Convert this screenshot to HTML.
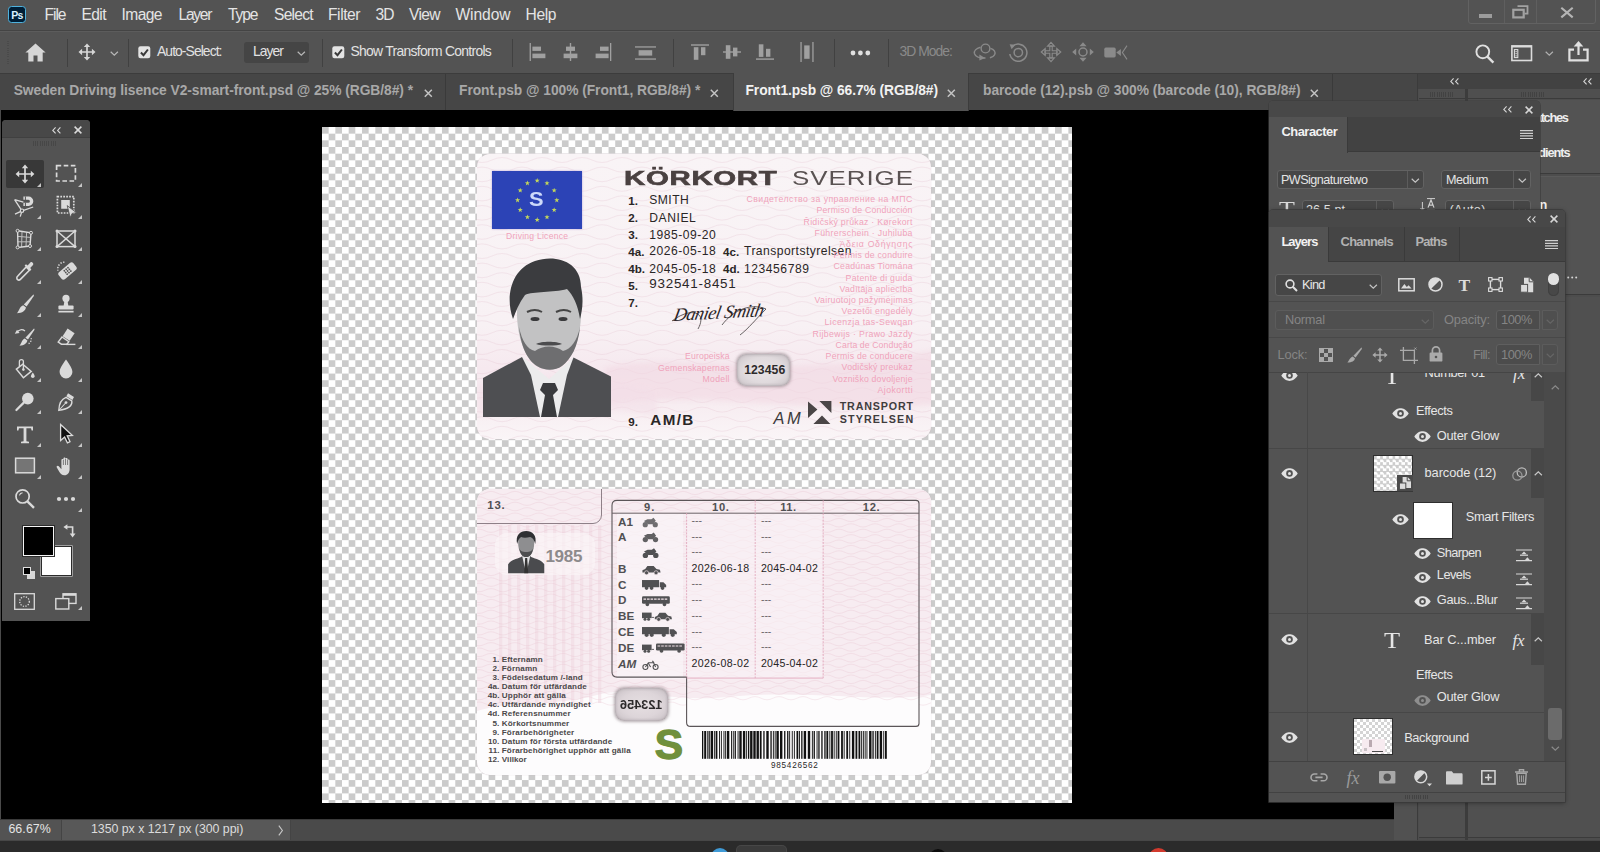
<!DOCTYPE html>
<html lang="en">
<head>
<meta charset="utf-8">
<title>Front1.psb @ 66.7% (RGB/8#)</title>
<style>
*{box-sizing:border-box;margin:0;padding:0}
html,body{width:1600px;height:852px;overflow:hidden;background:#000}
body{position:relative;font-family:"Liberation Sans","DejaVu Sans",sans-serif;color:#dcdcdc;font-size:13px}
.abs{position:absolute}
.t{position:absolute;white-space:nowrap;line-height:1}
svg{position:absolute;overflow:visible}
#menubar{left:0;top:0;width:1600px;height:31px;background:#535353;border-bottom:1px solid #444}
#optbar{left:0;top:31px;width:1600px;height:42px;background:#535353;border-top:1px solid #5c5c5c}
#optbar .sep{position:absolute;top:7px;width:1px;height:28px;background:#414141}
#tabbar{left:0;top:73px;width:1600px;height:37px;background:#464646;border-top:1px solid #3c3c3c}
#tabbar .tsep{position:absolute;top:0;width:1px;height:36px;background:#3a3a3a}
</style>
</head>
<body>
<div id="menubar" class="abs">
<div class="abs" style="left:8px;top:6px;width:18px;height:17px;background:#001e36;border:1.500px solid #4fb2de;border-radius:3.500px;"></div>
<div class="t" style="left:11.3px;top:10.1px;font-size:10.5px;font-weight:bold;color:#d9efff;letter-spacing:-0.84px;">Ps</div>
<div class="t" style="left:44.5px;top:7.2px;font-size:15.6px;color:#e4e4e4;letter-spacing:-1.05px;">File</div>
<div class="t" style="left:81.5px;top:7.2px;font-size:15.6px;color:#e4e4e4;letter-spacing:-0.63px;">Edit</div>
<div class="t" style="left:121.5px;top:7.2px;font-size:15.6px;color:#e4e4e4;letter-spacing:-0.59px;">Image</div>
<div class="t" style="left:178.5px;top:7.2px;font-size:15.6px;color:#e4e4e4;letter-spacing:-1.26px;">Layer</div>
<div class="t" style="left:228.0px;top:7.2px;font-size:15.6px;color:#e4e4e4;letter-spacing:-1.11px;">Type</div>
<div class="t" style="left:274.0px;top:7.2px;font-size:15.6px;color:#e4e4e4;letter-spacing:-0.77px;">Select</div>
<div class="t" style="left:328.0px;top:7.2px;font-size:15.6px;color:#e4e4e4;letter-spacing:-0.43px;">Filter</div>
<div class="t" style="left:375.5px;top:7.2px;font-size:15.6px;color:#e4e4e4;letter-spacing:-0.94px;">3D</div>
<div class="t" style="left:409.0px;top:7.2px;font-size:15.6px;color:#e4e4e4;letter-spacing:-0.68px;">View</div>
<div class="t" style="left:455.5px;top:7.2px;font-size:15.6px;color:#e4e4e4;letter-spacing:-0.10px;">Window</div>
<div class="t" style="left:525.5px;top:7.2px;font-size:15.6px;color:#e4e4e4;letter-spacing:-0.36px;">Help</div>
<div class="abs" style="left:1468px;top:-1px;width:128px;height:24.5px;border:1px solid #626262;border-radius:0 0 3px 3px;"></div>
<div class="abs" style="left:1504px;top:0px;width:1px;height:23px;background:#5f5f5f;"></div>
<div class="abs" style="left:1536px;top:0px;width:1px;height:23px;background:#5f5f5f;"></div>
<div class="abs" style="left:1479px;top:14px;width:13px;height:4px;background:#9c9c9c;"></div>
<svg style="left:1511.5px;top:5.4px;" width="17" height="14" viewBox="0 0 17 14"><path d="M5.500 1.200h10v7.400h-3" fill="none" stroke="#a2a2a2" stroke-width="1.800"/><rect x="1.300" y="4.800" width="10.400" height="7.600" fill="none" stroke="#a2a2a2" stroke-width="2.200"/></svg>
<svg style="left:1560px;top:6.6px;" width="14" height="11" viewBox="0 0 14 11"><path d="M1.300 0.800l11.400 9.600M12.700 0.800l-11.400 9.600" stroke="#b4b4b4" stroke-width="2.100" fill="none"/></svg>
</div>
<div id="optbar" class="abs">
<div class="abs" style="left:6.500px;top:9px;width:2px;height:24px;background:repeating-linear-gradient(180deg,#4a4a4a 0 1px,transparent 1px 2.200px)"></div>
<svg style="left:25px;top:10.5px;" width="21" height="19" viewBox="0 0 21 19"><path d="M10.5 0.6L0.4 9.6h2.9V18.4h5.2v-5.9h4v5.9h5.2V9.6h2.9z" fill="#d6d6d6"/></svg>
<div class="sep" style="left:67px"></div>
<div class="sep" style="left:128px"></div>
<div class="sep" style="left:321.5px"></div>
<div class="sep" style="left:511.5px"></div>
<div class="sep" style="left:672.5px"></div>
<div class="sep" style="left:834px"></div>
<div class="sep" style="left:887.5px"></div>
<svg style="left:78px;top:11px;" width="18" height="18" viewBox="0 0 18 18"><path d="M9 0.5l3.2 3.6H5.8zM9 17.5l3.2-3.6H5.8zM0.5 9l3.6-3.2v6.4zM17.5 9l-3.6-3.2v6.4z" fill="#d6d6d6"/><path d="M9 3.5v11M3.5 9h11" stroke="#d6d6d6" stroke-width="1.7" fill="none"/></svg>
<svg style="left:109.5px;top:19px;" width="9" height="5" viewBox="0 0 9 5"><path d="M0.7 0.8l3.6 3.4 3.6-3.4" fill="none" stroke="#b8b8b8" stroke-width="1.2"/></svg>
<svg style="left:138px;top:14px;" width="13" height="13" viewBox="0 0 13 13"><rect x="0.3" y="0.3" width="12" height="12" rx="2.2" fill="#e4e4e4"/><path d="M2.9 6.5l2.6 2.7 4.4-5.7" fill="none" stroke="#3a3a3a" stroke-width="2"/></svg>
<div class="t" style="left:157.0px;top:12.7px;font-size:13.9px;color:#e2e2e2;letter-spacing:-0.93px;">Auto-Select:</div>
<div class="abs" style="left:243.5px;top:10px;width:65.5px;height:21px;background:#454545;border-radius:3px;"></div>
<div class="t" style="left:253.0px;top:13.0px;font-size:13.9px;color:#e2e2e2;letter-spacing:-0.94px;">Layer</div>
<svg style="left:296.5px;top:19px;" width="9" height="5" viewBox="0 0 9 5"><path d="M0.7 0.8l3.6 3.4 3.6-3.4" fill="none" stroke="#b8b8b8" stroke-width="1.2"/></svg>
<svg style="left:332px;top:14px;" width="13" height="13" viewBox="0 0 13 13"><rect x="0.3" y="0.3" width="12" height="12" rx="2.2" fill="#e4e4e4"/><path d="M2.9 6.5l2.6 2.7 4.4-5.7" fill="none" stroke="#3a3a3a" stroke-width="2"/></svg>
<div class="t" style="left:350.5px;top:12.7px;font-size:13.9px;color:#e2e2e2;letter-spacing:-0.70px;">Show Transform Controls</div>
<svg style="left:529px;top:11px;" width="17" height="18" viewBox="0 0 17 18"><rect x="0.6" y="0" width="1.3" height="18" fill="#a0a0a0"/><rect x="3.4" y="3.6" width="8.6" height="4.3" fill="#a0a0a0"/><rect x="3.4" y="10.6" width="13" height="4.6" fill="#a0a0a0"/></svg>
<svg style="left:562.5px;top:11px;" width="15" height="18" viewBox="0 0 15 18"><rect x="6.8" y="0" width="1.4" height="18" fill="#a0a0a0"/><rect x="3" y="3.6" width="9" height="4.3" fill="#a0a0a0"/><rect x="0.6" y="10.6" width="13.8" height="4.6" fill="#a0a0a0"/></svg>
<svg style="left:594.5px;top:11px;" width="17" height="18" viewBox="0 0 17 18"><rect x="15" y="0" width="1.3" height="18" fill="#a0a0a0"/><rect x="5" y="3.6" width="8.6" height="4.3" fill="#a0a0a0"/><rect x="0.6" y="10.6" width="13" height="4.6" fill="#a0a0a0"/></svg>
<svg style="left:635px;top:13.5px;" width="21" height="14" viewBox="0 0 21 14"><rect x="0" y="0.3" width="21" height="1.3" fill="#a0a0a0"/><rect x="0" y="12.4" width="21" height="1.3" fill="#a0a0a0"/><rect x="3.6" y="4.2" width="13.6" height="5.4" fill="#a0a0a0"/></svg>
<svg style="left:690.5px;top:12.299999999999997px;" width="18" height="16" viewBox="0 0 18 16"><rect x="0" y="0.3" width="18" height="1.4" fill="#a0a0a0"/><rect x="2.8" y="3.2" width="4.6" height="12.6" fill="#a0a0a0"/><rect x="10" y="3.2" width="4.4" height="8" fill="#a0a0a0"/></svg>
<svg style="left:723px;top:12.299999999999997px;" width="18" height="16" viewBox="0 0 18 16"><rect x="0" y="7.3" width="18" height="1.4" fill="#a0a0a0"/><rect x="2.8" y="1.2" width="4.6" height="13.6" fill="#a0a0a0"/><rect x="10" y="3.6" width="4.4" height="8.8" fill="#a0a0a0"/></svg>
<svg style="left:755.5px;top:12.299999999999997px;" width="18" height="16" viewBox="0 0 18 16"><rect x="0" y="14.4" width="18" height="1.4" fill="#a0a0a0"/><rect x="2.8" y="0.3" width="4.6" height="12.6" fill="#a0a0a0"/><rect x="10" y="4.8" width="4.4" height="8" fill="#a0a0a0"/></svg>
<svg style="left:800px;top:10px;" width="14" height="20" viewBox="0 0 14 20"><rect x="0.4" y="0" width="1.3" height="20" fill="#a0a0a0"/><rect x="12.3" y="0" width="1.3" height="20" fill="#a0a0a0"/><rect x="4.2" y="3.4" width="5.4" height="13.4" fill="#a0a0a0"/></svg>
<svg style="left:850px;top:18px;" width="21" height="6" viewBox="0 0 21 6"><circle cx="3" cy="3" r="2.4" fill="#e0e0e0"/><circle cx="10.4" cy="3" r="2.4" fill="#e0e0e0"/><circle cx="17.8" cy="3" r="2.4" fill="#e0e0e0"/></svg>
<div class="t" style="left:899.5px;top:12.7px;font-size:13.9px;color:#8a8a8a;letter-spacing:-0.97px;">3D Mode:</div>
<svg style="left:973px;top:10px;" width="24" height="20" viewBox="0 0 24 20"><circle cx="12.5" cy="6.5" r="4.4" fill="none" stroke="#8a8a8a" stroke-width="1.4"/><path d="M7.5 5.2C3 6.3 0.6 9 1.5 11.7c1.1 3 6 4.5 11 4.3" fill="none" stroke="#8a8a8a" stroke-width="1.4"/><path d="M17.5 6.3c3.6 1 5.3 3.7 4.2 6.2-.8 1.8-2.8 2.8-4.8 3.2" fill="none" stroke="#8a8a8a" stroke-width="1.4"/><path d="M6.4 12.5l5.6 3.6-5.6 2.4z" fill="#8a8a8a"/></svg>
<svg style="left:1007px;top:10px;" width="22" height="20" viewBox="0 0 22 20"><circle cx="11.3" cy="10.6" r="4.2" fill="none" stroke="#8a8a8a" stroke-width="1.5"/><path d="M5.4 4.4A8.6 8.6 0 1 1 2.8 12" fill="none" stroke="#8a8a8a" stroke-width="1.5"/><path d="M2.6 2.2l5.8 0.6-3.8 4.4z" fill="#8a8a8a"/></svg>
<svg style="left:1040.5px;top:10px;" width="20" height="20" viewBox="0 0 20 20"><path d="M10 0.3l3.4 3.9H6.6zM10 19.7l3.4-3.9H6.6zM0.3 10l3.9-3.4v6.8zM19.7 10l-3.9-3.4v6.8z" fill="none" stroke="#8a8a8a" stroke-width="1.2"/><path d="M8.8 4v4.8H4v2.4h4.8V16h2.4v-4.8H16V8.8h-4.8V4z" fill="none" stroke="#8a8a8a" stroke-width="1.1"/></svg>
<svg style="left:1072px;top:10px;" width="22" height="20" viewBox="0 0 22 20"><path d="M11 0.2l3.6 4H7.4zM11 19.8l3.6-4H7.4zM0.2 10l4-3.4v6.8zM21.8 10l-4-3.4v6.8z" fill="#8a8a8a"/><circle cx="11" cy="10" r="4" fill="none" stroke="#8a8a8a" stroke-width="1.5"/></svg>
<svg style="left:1103.5px;top:13px;" width="24" height="15" viewBox="0 0 24 15"><rect x="0.3" y="2.6" width="11.4" height="9.8" rx="1.6" fill="#8a8a8a"/><path d="M12.3 7.5l4.6-3.6v7.2z" fill="#8a8a8a"/><path d="M23 0.6l-4.6 6.9 4.6 6.9" fill="none" stroke="#8a8a8a" stroke-width="1.1"/></svg>
<svg style="left:1475px;top:11.5px;" width="20" height="20" viewBox="0 0 20 20"><circle cx="7.8" cy="7.8" r="6.4" fill="none" stroke="#e0e0e0" stroke-width="1.9"/><path d="M12.4 12.6l6 6" stroke="#e0e0e0" stroke-width="2.4"/></svg>
<svg style="left:1510.5px;top:13px;" width="22" height="17" viewBox="0 0 22 17"><rect x="0.900" y="0.900" width="19.600" height="14.600" fill="none" stroke="#dcdcdc" stroke-width="1.600"/><rect x="0.900" y="0.900" width="19.600" height="1.600" fill="#dcdcdc"/><rect x="3.400" y="4.600" width="3.400" height="8" fill="none" stroke="#dcdcdc" stroke-width="1.100"/><path d="M5.100 6v5.400" stroke="#dcdcdc" stroke-width="1.200" stroke-dasharray="1.200 0.900"/></svg>
<svg style="left:1545px;top:19px;" width="9" height="5" viewBox="0 0 9 5"><path d="M0.7 0.8l3.6 3.4 3.6-3.4" fill="none" stroke="#b0b0b0" stroke-width="1.2"/></svg>
<svg style="left:1568px;top:9px;" width="21" height="21" viewBox="0 0 21 21"><path d="M6 8.6H1.4V19.4h18.2V8.6H15" fill="none" stroke="#e0e0e0" stroke-width="2.2"/><path d="M10.5 14V3" stroke="#e0e0e0" stroke-width="2.2"/><path d="M10.5 0l4.8 5.4H5.7z" fill="#e0e0e0"/></svg>
</div>
<div id="tabbar" class="abs">
<div class="t" style="left:13.7px;top:10.3px;font-size:13.8px;font-weight:bold;color:#a8a8a8;letter-spacing:-0.05px;">Sweden Driving lisence V2-smart-front.psd @ 25% (RGB/8#) *</div>
<svg style="left:423.5px;top:14.5px;" width="9" height="9" viewBox="0 0 9 9"><path d="M0.8 0.8l7 7M7.8 0.8l-7 7" stroke="#c4c4c4" stroke-width="1.5" fill="none"/></svg>
<div class="tsep" style="left:445px"></div>
<div class="t" style="left:459.0px;top:10.3px;font-size:13.8px;font-weight:bold;color:#a8a8a8;letter-spacing:-0.04px;">Front.psb @ 100% (Front1, RGB/8#) *</div>
<svg style="left:710px;top:14.5px;" width="9" height="9" viewBox="0 0 9 9"><path d="M0.8 0.8l7 7M7.8 0.8l-7 7" stroke="#c4c4c4" stroke-width="1.5" fill="none"/></svg>
<div class="abs" style="left:732.5px;top:-1px;width:236.5px;height:38px;background:#535353;border-left:1px solid #3c3c3c;border-right:1px solid #3c3c3c;"></div>
<div class="t" style="left:745.5px;top:10.3px;font-size:13.8px;font-weight:bold;color:#f2f2f2;letter-spacing:-0.07px;">Front1.psb @ 66.7% (RGB/8#)</div>
<svg style="left:947px;top:14.5px;" width="9" height="9" viewBox="0 0 9 9"><path d="M0.8 0.8l7 7M7.8 0.8l-7 7" stroke="#c4c4c4" stroke-width="1.5" fill="none"/></svg>
<div class="t" style="left:983.0px;top:10.3px;font-size:13.8px;font-weight:bold;color:#a8a8a8;letter-spacing:-0.04px;">barcode (12).psb @ 300% (barcode (10), RGB/8#)</div>
<svg style="left:1309.5px;top:14.5px;" width="9" height="9" viewBox="0 0 9 9"><path d="M0.8 0.8l7 7M7.8 0.8l-7 7" stroke="#c4c4c4" stroke-width="1.5" fill="none"/></svg>
<div class="tsep" style="left:1332px"></div>
</div>
<div id="canvas" class="abs" style="left:322px;top:127px;width:750px;height:676px;overflow:hidden;background-color:#fff;background-image:conic-gradient(#fff 25%,#cbcbcb 0 50%,#fff 0 75%,#cbcbcb 0);background-size:13.3334px 13.3334px;">
<div class="abs" style="left:154.8px;top:27.3px;width:453.8px;height:285px;border-radius:13px;overflow:hidden;background:linear-gradient(180deg,#f9f4f6 0%,#f8f1f4 60%,#f6e9ef 75%,#f7edf1 88%,#faf5f7 100%);box-shadow:0 0 1px rgba(200,170,185,.8)">
<svg style="left:0;top:0" width="454" height="285"><path d="M-5 6.0 q10 5 20 0 q10 -5 20 0 q10 5 20 0 q10 -5 20 0 q10 5 20 0 q10 -5 20 0 q10 5 20 0 q10 -5 20 0 q10 5 20 0 q10 -5 20 0 q10 5 20 0 q10 -5 20 0 q10 5 20 0 q10 -5 20 0 q10 5 20 0 q10 -5 20 0 q10 5 20 0 q10 -5 20 0 q10 5 20 0 q10 -5 20 0 q10 5 20 0 q10 -5 20 0 q10 5 20 0 q10 -5 20 0" fill="none" stroke="#e3bccb" stroke-width="0.5" opacity="0.55"/><path d="M-5 15.6 q10 -5 20 0 q10 5 20 0 q10 -5 20 0 q10 5 20 0 q10 -5 20 0 q10 5 20 0 q10 -5 20 0 q10 5 20 0 q10 -5 20 0 q10 5 20 0 q10 -5 20 0 q10 5 20 0 q10 -5 20 0 q10 5 20 0 q10 -5 20 0 q10 5 20 0 q10 -5 20 0 q10 5 20 0 q10 -5 20 0 q10 5 20 0 q10 -5 20 0 q10 5 20 0 q10 -5 20 0 q10 5 20 0" fill="none" stroke="#e3bccb" stroke-width="0.5" opacity="0.55"/><path d="M-5 25.2 q10 5 20 0 q10 -5 20 0 q10 5 20 0 q10 -5 20 0 q10 5 20 0 q10 -5 20 0 q10 5 20 0 q10 -5 20 0 q10 5 20 0 q10 -5 20 0 q10 5 20 0 q10 -5 20 0 q10 5 20 0 q10 -5 20 0 q10 5 20 0 q10 -5 20 0 q10 5 20 0 q10 -5 20 0 q10 5 20 0 q10 -5 20 0 q10 5 20 0 q10 -5 20 0 q10 5 20 0 q10 -5 20 0" fill="none" stroke="#e3bccb" stroke-width="0.5" opacity="0.55"/><path d="M-5 34.8 q10 -5 20 0 q10 5 20 0 q10 -5 20 0 q10 5 20 0 q10 -5 20 0 q10 5 20 0 q10 -5 20 0 q10 5 20 0 q10 -5 20 0 q10 5 20 0 q10 -5 20 0 q10 5 20 0 q10 -5 20 0 q10 5 20 0 q10 -5 20 0 q10 5 20 0 q10 -5 20 0 q10 5 20 0 q10 -5 20 0 q10 5 20 0 q10 -5 20 0 q10 5 20 0 q10 -5 20 0 q10 5 20 0" fill="none" stroke="#e3bccb" stroke-width="0.5" opacity="0.55"/><path d="M-5 44.4 q10 5 20 0 q10 -5 20 0 q10 5 20 0 q10 -5 20 0 q10 5 20 0 q10 -5 20 0 q10 5 20 0 q10 -5 20 0 q10 5 20 0 q10 -5 20 0 q10 5 20 0 q10 -5 20 0 q10 5 20 0 q10 -5 20 0 q10 5 20 0 q10 -5 20 0 q10 5 20 0 q10 -5 20 0 q10 5 20 0 q10 -5 20 0 q10 5 20 0 q10 -5 20 0 q10 5 20 0 q10 -5 20 0" fill="none" stroke="#e3bccb" stroke-width="0.5" opacity="0.55"/><path d="M-5 54.0 q10 -5 20 0 q10 5 20 0 q10 -5 20 0 q10 5 20 0 q10 -5 20 0 q10 5 20 0 q10 -5 20 0 q10 5 20 0 q10 -5 20 0 q10 5 20 0 q10 -5 20 0 q10 5 20 0 q10 -5 20 0 q10 5 20 0 q10 -5 20 0 q10 5 20 0 q10 -5 20 0 q10 5 20 0 q10 -5 20 0 q10 5 20 0 q10 -5 20 0 q10 5 20 0 q10 -5 20 0 q10 5 20 0" fill="none" stroke="#e3bccb" stroke-width="0.5" opacity="0.55"/><path d="M-5 63.6 q10 5 20 0 q10 -5 20 0 q10 5 20 0 q10 -5 20 0 q10 5 20 0 q10 -5 20 0 q10 5 20 0 q10 -5 20 0 q10 5 20 0 q10 -5 20 0 q10 5 20 0 q10 -5 20 0 q10 5 20 0 q10 -5 20 0 q10 5 20 0 q10 -5 20 0 q10 5 20 0 q10 -5 20 0 q10 5 20 0 q10 -5 20 0 q10 5 20 0 q10 -5 20 0 q10 5 20 0 q10 -5 20 0" fill="none" stroke="#e3bccb" stroke-width="0.5" opacity="0.55"/><path d="M-5 73.2 q10 -5 20 0 q10 5 20 0 q10 -5 20 0 q10 5 20 0 q10 -5 20 0 q10 5 20 0 q10 -5 20 0 q10 5 20 0 q10 -5 20 0 q10 5 20 0 q10 -5 20 0 q10 5 20 0 q10 -5 20 0 q10 5 20 0 q10 -5 20 0 q10 5 20 0 q10 -5 20 0 q10 5 20 0 q10 -5 20 0 q10 5 20 0 q10 -5 20 0 q10 5 20 0 q10 -5 20 0 q10 5 20 0" fill="none" stroke="#e3bccb" stroke-width="0.5" opacity="0.55"/><path d="M-5 82.8 q10 5 20 0 q10 -5 20 0 q10 5 20 0 q10 -5 20 0 q10 5 20 0 q10 -5 20 0 q10 5 20 0 q10 -5 20 0 q10 5 20 0 q10 -5 20 0 q10 5 20 0 q10 -5 20 0 q10 5 20 0 q10 -5 20 0 q10 5 20 0 q10 -5 20 0 q10 5 20 0 q10 -5 20 0 q10 5 20 0 q10 -5 20 0 q10 5 20 0 q10 -5 20 0 q10 5 20 0 q10 -5 20 0" fill="none" stroke="#e3bccb" stroke-width="0.5" opacity="0.55"/><path d="M-5 92.4 q10 -5 20 0 q10 5 20 0 q10 -5 20 0 q10 5 20 0 q10 -5 20 0 q10 5 20 0 q10 -5 20 0 q10 5 20 0 q10 -5 20 0 q10 5 20 0 q10 -5 20 0 q10 5 20 0 q10 -5 20 0 q10 5 20 0 q10 -5 20 0 q10 5 20 0 q10 -5 20 0 q10 5 20 0 q10 -5 20 0 q10 5 20 0 q10 -5 20 0 q10 5 20 0 q10 -5 20 0 q10 5 20 0" fill="none" stroke="#e3bccb" stroke-width="0.5" opacity="0.55"/><path d="M-5 102.0 q10 5 20 0 q10 -5 20 0 q10 5 20 0 q10 -5 20 0 q10 5 20 0 q10 -5 20 0 q10 5 20 0 q10 -5 20 0 q10 5 20 0 q10 -5 20 0 q10 5 20 0 q10 -5 20 0 q10 5 20 0 q10 -5 20 0 q10 5 20 0 q10 -5 20 0 q10 5 20 0 q10 -5 20 0 q10 5 20 0 q10 -5 20 0 q10 5 20 0 q10 -5 20 0 q10 5 20 0 q10 -5 20 0" fill="none" stroke="#e3bccb" stroke-width="0.5" opacity="0.55"/><path d="M-5 111.6 q10 -5 20 0 q10 5 20 0 q10 -5 20 0 q10 5 20 0 q10 -5 20 0 q10 5 20 0 q10 -5 20 0 q10 5 20 0 q10 -5 20 0 q10 5 20 0 q10 -5 20 0 q10 5 20 0 q10 -5 20 0 q10 5 20 0 q10 -5 20 0 q10 5 20 0 q10 -5 20 0 q10 5 20 0 q10 -5 20 0 q10 5 20 0 q10 -5 20 0 q10 5 20 0 q10 -5 20 0 q10 5 20 0" fill="none" stroke="#e3bccb" stroke-width="0.5" opacity="0.55"/><path d="M-5 121.2 q10 5 20 0 q10 -5 20 0 q10 5 20 0 q10 -5 20 0 q10 5 20 0 q10 -5 20 0 q10 5 20 0 q10 -5 20 0 q10 5 20 0 q10 -5 20 0 q10 5 20 0 q10 -5 20 0 q10 5 20 0 q10 -5 20 0 q10 5 20 0 q10 -5 20 0 q10 5 20 0 q10 -5 20 0 q10 5 20 0 q10 -5 20 0 q10 5 20 0 q10 -5 20 0 q10 5 20 0 q10 -5 20 0" fill="none" stroke="#e3bccb" stroke-width="0.5" opacity="0.55"/><path d="M-5 130.8 q10 -5 20 0 q10 5 20 0 q10 -5 20 0 q10 5 20 0 q10 -5 20 0 q10 5 20 0 q10 -5 20 0 q10 5 20 0 q10 -5 20 0 q10 5 20 0 q10 -5 20 0 q10 5 20 0 q10 -5 20 0 q10 5 20 0 q10 -5 20 0 q10 5 20 0 q10 -5 20 0 q10 5 20 0 q10 -5 20 0 q10 5 20 0 q10 -5 20 0 q10 5 20 0 q10 -5 20 0 q10 5 20 0" fill="none" stroke="#e3bccb" stroke-width="0.5" opacity="0.55"/><path d="M-5 140.4 q10 5 20 0 q10 -5 20 0 q10 5 20 0 q10 -5 20 0 q10 5 20 0 q10 -5 20 0 q10 5 20 0 q10 -5 20 0 q10 5 20 0 q10 -5 20 0 q10 5 20 0 q10 -5 20 0 q10 5 20 0 q10 -5 20 0 q10 5 20 0 q10 -5 20 0 q10 5 20 0 q10 -5 20 0 q10 5 20 0 q10 -5 20 0 q10 5 20 0 q10 -5 20 0 q10 5 20 0 q10 -5 20 0" fill="none" stroke="#e3bccb" stroke-width="0.5" opacity="0.55"/><path d="M-5 150.0 q10 -5 20 0 q10 5 20 0 q10 -5 20 0 q10 5 20 0 q10 -5 20 0 q10 5 20 0 q10 -5 20 0 q10 5 20 0 q10 -5 20 0 q10 5 20 0 q10 -5 20 0 q10 5 20 0 q10 -5 20 0 q10 5 20 0 q10 -5 20 0 q10 5 20 0 q10 -5 20 0 q10 5 20 0 q10 -5 20 0 q10 5 20 0 q10 -5 20 0 q10 5 20 0 q10 -5 20 0 q10 5 20 0" fill="none" stroke="#e3bccb" stroke-width="0.5" opacity="0.55"/><path d="M-5 159.6 q10 5 20 0 q10 -5 20 0 q10 5 20 0 q10 -5 20 0 q10 5 20 0 q10 -5 20 0 q10 5 20 0 q10 -5 20 0 q10 5 20 0 q10 -5 20 0 q10 5 20 0 q10 -5 20 0 q10 5 20 0 q10 -5 20 0 q10 5 20 0 q10 -5 20 0 q10 5 20 0 q10 -5 20 0 q10 5 20 0 q10 -5 20 0 q10 5 20 0 q10 -5 20 0 q10 5 20 0 q10 -5 20 0" fill="none" stroke="#e3bccb" stroke-width="0.5" opacity="0.55"/><path d="M-5 169.2 q10 -5 20 0 q10 5 20 0 q10 -5 20 0 q10 5 20 0 q10 -5 20 0 q10 5 20 0 q10 -5 20 0 q10 5 20 0 q10 -5 20 0 q10 5 20 0 q10 -5 20 0 q10 5 20 0 q10 -5 20 0 q10 5 20 0 q10 -5 20 0 q10 5 20 0 q10 -5 20 0 q10 5 20 0 q10 -5 20 0 q10 5 20 0 q10 -5 20 0 q10 5 20 0 q10 -5 20 0 q10 5 20 0" fill="none" stroke="#e3bccb" stroke-width="0.5" opacity="0.55"/><path d="M-5 178.8 q10 5 20 0 q10 -5 20 0 q10 5 20 0 q10 -5 20 0 q10 5 20 0 q10 -5 20 0 q10 5 20 0 q10 -5 20 0 q10 5 20 0 q10 -5 20 0 q10 5 20 0 q10 -5 20 0 q10 5 20 0 q10 -5 20 0 q10 5 20 0 q10 -5 20 0 q10 5 20 0 q10 -5 20 0 q10 5 20 0 q10 -5 20 0 q10 5 20 0 q10 -5 20 0 q10 5 20 0 q10 -5 20 0" fill="none" stroke="#e3bccb" stroke-width="0.5" opacity="0.55"/><path d="M-5 188.4 q10 -5 20 0 q10 5 20 0 q10 -5 20 0 q10 5 20 0 q10 -5 20 0 q10 5 20 0 q10 -5 20 0 q10 5 20 0 q10 -5 20 0 q10 5 20 0 q10 -5 20 0 q10 5 20 0 q10 -5 20 0 q10 5 20 0 q10 -5 20 0 q10 5 20 0 q10 -5 20 0 q10 5 20 0 q10 -5 20 0 q10 5 20 0 q10 -5 20 0 q10 5 20 0 q10 -5 20 0 q10 5 20 0" fill="none" stroke="#e3bccb" stroke-width="0.5" opacity="0.55"/><path d="M-5 198.0 q10 5 20 0 q10 -5 20 0 q10 5 20 0 q10 -5 20 0 q10 5 20 0 q10 -5 20 0 q10 5 20 0 q10 -5 20 0 q10 5 20 0 q10 -5 20 0 q10 5 20 0 q10 -5 20 0 q10 5 20 0 q10 -5 20 0 q10 5 20 0 q10 -5 20 0 q10 5 20 0 q10 -5 20 0 q10 5 20 0 q10 -5 20 0 q10 5 20 0 q10 -5 20 0 q10 5 20 0 q10 -5 20 0" fill="none" stroke="#e3bccb" stroke-width="0.5" opacity="0.55"/><path d="M-5 207.6 q10 -5 20 0 q10 5 20 0 q10 -5 20 0 q10 5 20 0 q10 -5 20 0 q10 5 20 0 q10 -5 20 0 q10 5 20 0 q10 -5 20 0 q10 5 20 0 q10 -5 20 0 q10 5 20 0 q10 -5 20 0 q10 5 20 0 q10 -5 20 0 q10 5 20 0 q10 -5 20 0 q10 5 20 0 q10 -5 20 0 q10 5 20 0 q10 -5 20 0 q10 5 20 0 q10 -5 20 0 q10 5 20 0" fill="none" stroke="#e3bccb" stroke-width="0.5" opacity="0.55"/><path d="M-5 217.2 q10 5 20 0 q10 -5 20 0 q10 5 20 0 q10 -5 20 0 q10 5 20 0 q10 -5 20 0 q10 5 20 0 q10 -5 20 0 q10 5 20 0 q10 -5 20 0 q10 5 20 0 q10 -5 20 0 q10 5 20 0 q10 -5 20 0 q10 5 20 0 q10 -5 20 0 q10 5 20 0 q10 -5 20 0 q10 5 20 0 q10 -5 20 0 q10 5 20 0 q10 -5 20 0 q10 5 20 0 q10 -5 20 0" fill="none" stroke="#e3bccb" stroke-width="0.5" opacity="0.55"/><path d="M-5 226.8 q10 -5 20 0 q10 5 20 0 q10 -5 20 0 q10 5 20 0 q10 -5 20 0 q10 5 20 0 q10 -5 20 0 q10 5 20 0 q10 -5 20 0 q10 5 20 0 q10 -5 20 0 q10 5 20 0 q10 -5 20 0 q10 5 20 0 q10 -5 20 0 q10 5 20 0 q10 -5 20 0 q10 5 20 0 q10 -5 20 0 q10 5 20 0 q10 -5 20 0 q10 5 20 0 q10 -5 20 0 q10 5 20 0" fill="none" stroke="#e3bccb" stroke-width="0.5" opacity="0.55"/><path d="M-5 236.4 q10 5 20 0 q10 -5 20 0 q10 5 20 0 q10 -5 20 0 q10 5 20 0 q10 -5 20 0 q10 5 20 0 q10 -5 20 0 q10 5 20 0 q10 -5 20 0 q10 5 20 0 q10 -5 20 0 q10 5 20 0 q10 -5 20 0 q10 5 20 0 q10 -5 20 0 q10 5 20 0 q10 -5 20 0 q10 5 20 0 q10 -5 20 0 q10 5 20 0 q10 -5 20 0 q10 5 20 0 q10 -5 20 0" fill="none" stroke="#e3bccb" stroke-width="0.5" opacity="0.55"/><path d="M-5 246.0 q10 -5 20 0 q10 5 20 0 q10 -5 20 0 q10 5 20 0 q10 -5 20 0 q10 5 20 0 q10 -5 20 0 q10 5 20 0 q10 -5 20 0 q10 5 20 0 q10 -5 20 0 q10 5 20 0 q10 -5 20 0 q10 5 20 0 q10 -5 20 0 q10 5 20 0 q10 -5 20 0 q10 5 20 0 q10 -5 20 0 q10 5 20 0 q10 -5 20 0 q10 5 20 0 q10 -5 20 0 q10 5 20 0" fill="none" stroke="#e3bccb" stroke-width="0.5" opacity="0.55"/><path d="M-5 255.6 q10 5 20 0 q10 -5 20 0 q10 5 20 0 q10 -5 20 0 q10 5 20 0 q10 -5 20 0 q10 5 20 0 q10 -5 20 0 q10 5 20 0 q10 -5 20 0 q10 5 20 0 q10 -5 20 0 q10 5 20 0 q10 -5 20 0 q10 5 20 0 q10 -5 20 0 q10 5 20 0 q10 -5 20 0 q10 5 20 0 q10 -5 20 0 q10 5 20 0 q10 -5 20 0 q10 5 20 0 q10 -5 20 0" fill="none" stroke="#e3bccb" stroke-width="0.5" opacity="0.55"/><path d="M-5 265.2 q10 -5 20 0 q10 5 20 0 q10 -5 20 0 q10 5 20 0 q10 -5 20 0 q10 5 20 0 q10 -5 20 0 q10 5 20 0 q10 -5 20 0 q10 5 20 0 q10 -5 20 0 q10 5 20 0 q10 -5 20 0 q10 5 20 0 q10 -5 20 0 q10 5 20 0 q10 -5 20 0 q10 5 20 0 q10 -5 20 0 q10 5 20 0 q10 -5 20 0 q10 5 20 0 q10 -5 20 0 q10 5 20 0" fill="none" stroke="#e3bccb" stroke-width="0.5" opacity="0.55"/><path d="M-5 274.8 q10 5 20 0 q10 -5 20 0 q10 5 20 0 q10 -5 20 0 q10 5 20 0 q10 -5 20 0 q10 5 20 0 q10 -5 20 0 q10 5 20 0 q10 -5 20 0 q10 5 20 0 q10 -5 20 0 q10 5 20 0 q10 -5 20 0 q10 5 20 0 q10 -5 20 0 q10 5 20 0 q10 -5 20 0 q10 5 20 0 q10 -5 20 0 q10 5 20 0 q10 -5 20 0 q10 5 20 0 q10 -5 20 0" fill="none" stroke="#e3bccb" stroke-width="0.5" opacity="0.55"/><path d="M-5 284.4 q10 -5 20 0 q10 5 20 0 q10 -5 20 0 q10 5 20 0 q10 -5 20 0 q10 5 20 0 q10 -5 20 0 q10 5 20 0 q10 -5 20 0 q10 5 20 0 q10 -5 20 0 q10 5 20 0 q10 -5 20 0 q10 5 20 0 q10 -5 20 0 q10 5 20 0 q10 -5 20 0 q10 5 20 0 q10 -5 20 0 q10 5 20 0 q10 -5 20 0 q10 5 20 0 q10 -5 20 0 q10 5 20 0" fill="none" stroke="#e3bccb" stroke-width="0.5" opacity="0.55"/><g style="filter:blur(2.500px)"><path d="M128 214 C200 196 300 230 460 196 V250 C330 262 230 236 128 250z" fill="#f1d9e3" opacity="0.6"/><path d="M0 232 C70 214 130 224 180 238 V262 C120 252 60 250 0 262z" fill="#f3dfe7" opacity="0.55"/></g></svg>
<div class="abs" style="left:15.2px;top:16.3px;width:90.4px;height:58.2px;background:#2c43b6;box-shadow:0 0 2px #b9a6d8;"></div>
<svg style="left:15.2px;top:16.3px" width="90.4" height="58.2"><polygon points="45.20,6.90 45.85,8.71 47.77,8.77 46.25,9.94 46.79,11.78 45.20,10.70 43.61,11.78 44.15,9.94 42.63,8.77 44.55,8.71" fill="#c3d65a"/><polygon points="55.00,9.53 55.65,11.34 57.57,11.39 56.05,12.57 56.59,14.41 55.00,13.33 53.41,14.41 53.95,12.57 52.43,11.39 54.35,11.34" fill="#c3d65a"/><polygon points="62.17,16.70 62.82,18.51 64.74,18.57 63.22,19.74 63.76,21.58 62.17,20.50 60.59,21.58 61.13,19.74 59.61,18.57 61.53,18.51" fill="#c3d65a"/><polygon points="64.80,26.50 65.45,28.31 67.37,28.37 65.85,29.54 66.39,31.38 64.80,30.30 63.21,31.38 63.75,29.54 62.23,28.37 64.15,28.31" fill="#c3d65a"/><polygon points="62.17,36.30 62.82,38.11 64.74,38.17 63.22,39.34 63.76,41.18 62.17,40.10 60.59,41.18 61.13,39.34 59.61,38.17 61.53,38.11" fill="#c3d65a"/><polygon points="55.00,43.47 55.65,45.28 57.57,45.34 56.05,46.51 56.59,48.36 55.00,47.27 53.41,48.36 53.95,46.51 52.43,45.34 54.35,45.28" fill="#c3d65a"/><polygon points="45.20,46.10 45.85,47.91 47.77,47.97 46.25,49.14 46.79,50.98 45.20,49.90 43.61,50.98 44.15,49.14 42.63,47.97 44.55,47.91" fill="#c3d65a"/><polygon points="35.40,43.47 36.05,45.28 37.97,45.34 36.45,46.51 36.99,48.36 35.40,47.27 33.81,48.36 34.35,46.51 32.83,45.34 34.75,45.28" fill="#c3d65a"/><polygon points="28.23,36.30 28.87,38.11 30.79,38.17 29.27,39.34 29.81,41.18 28.23,40.10 26.64,41.18 27.18,39.34 25.66,38.17 27.58,38.11" fill="#c3d65a"/><polygon points="25.60,26.50 26.25,28.31 28.17,28.37 26.65,29.54 27.19,31.38 25.60,30.30 24.01,31.38 24.55,29.54 23.03,28.37 24.95,28.31" fill="#c3d65a"/><polygon points="28.23,16.70 28.87,18.51 30.79,18.57 29.27,19.74 29.81,21.58 28.23,20.50 26.64,21.58 27.18,19.74 25.66,18.57 27.58,18.51" fill="#c3d65a"/><polygon points="35.40,9.53 36.05,11.34 37.97,11.39 36.45,12.57 36.99,14.41 35.40,13.33 33.81,14.41 34.35,12.57 32.83,11.39 34.75,11.34" fill="#c3d65a"/></svg>
<div class="t" style="left:52.2px;top:35.5px;font-size:19.5px;font-weight:bold;color:#cdd9fa;transform:scaleX(1.12);transform-origin:left;">S</div>
<div class="t" style="left:29.2px;top:77.4px;font-size:8.6px;color:#f0a3bb;letter-spacing:0.23px;">Driving Licence</div>
<div class="t" style="left:146.8px;top:14.4px;font-size:19.6px;font-weight:bold;color:#4a4141;-webkit-text-stroke:0.600px #4a4141;letter-spacing:0.46px;transform:scaleX(1.5);transform-origin:left">KÖRKORT</div>
<div class="t" style="left:315.5px;top:14.4px;font-size:19.6px;color:#5a5252;letter-spacing:0.75px;transform:scaleX(1.32);transform-origin:left">SVERIGE</div>
<div class="t" style="left:151.5px;top:40.8px;font-size:11.6px;font-weight:bold;color:#2a2626;">1.</div>
<div class="t" style="left:172.5px;top:40.1px;font-size:12.1px;color:#2a2626;letter-spacing:0.46px;">SMITH</div>
<div class="t" style="left:151.5px;top:58.0px;font-size:11.6px;font-weight:bold;color:#2a2626;">2.</div>
<div class="t" style="left:172.5px;top:57.3px;font-size:12.1px;color:#2a2626;letter-spacing:0.56px;">DANIEL</div>
<div class="t" style="left:151.5px;top:75.0px;font-size:11.6px;font-weight:bold;color:#2a2626;">3.</div>
<div class="t" style="left:172.5px;top:74.3px;font-size:12.1px;color:#2a2626;letter-spacing:0.51px;">1985-09-20</div>
<div class="t" style="left:151.5px;top:91.8px;font-size:11.6px;font-weight:bold;color:#2a2626;">4a.</div>
<div class="t" style="left:172.5px;top:91.1px;font-size:12.1px;color:#2a2626;letter-spacing:0.51px;">2026-05-18</div>
<div class="t" style="left:151.5px;top:109.0px;font-size:11.6px;font-weight:bold;color:#2a2626;">4b.</div>
<div class="t" style="left:172.5px;top:108.3px;font-size:12.1px;color:#2a2626;letter-spacing:0.51px;">2045-05-18</div>
<div class="t" style="left:151.5px;top:125.5px;font-size:11.6px;font-weight:bold;color:#2a2626;">5.</div>
<div class="t" style="left:172.5px;top:122.8px;font-size:13.4px;color:#2a2626;letter-spacing:0.75px;">932541-8451</div>
<div class="t" style="left:151.5px;top:142.3px;font-size:11.6px;font-weight:bold;color:#2a2626;">7.</div>
<div class="t" style="left:246.2px;top:91.8px;font-size:11.6px;font-weight:bold;color:#2a2626;">4c.</div>
<div class="t" style="left:267.2px;top:91.1px;font-size:12.1px;color:#2a2626;letter-spacing:0.46px;">Transportstyrelsen</div>
<div class="t" style="left:246.2px;top:109.0px;font-size:11.6px;font-weight:bold;color:#2a2626;">4d.</div>
<div class="t" style="left:267.2px;top:108.3px;font-size:12.1px;color:#2a2626;letter-spacing:0.55px;">123456789</div>
<div class="t" style="left:195.2px;top:151.7px;font-family:'Liberation Serif',serif;font-style:italic;font-size:18.5px;color:#2b2527;letter-spacing:-0.6px;transform:rotate(-3deg) skewX(-14deg);transform-origin:left bottom">Daniel Smith</div>
<svg style="left:191.2px;top:148.7px" width="104" height="34"><path d="M4 18 C22 4 40 8 30 26 M54 22 C66 6 84 0 98 6 C88 16 80 26 72 32" fill="none" stroke="#2b2527" stroke-width="0.7"/></svg>
<div class="t" style="left:269.8px;top:40.8px;font-size:8.7px;color:#f0a3bb;letter-spacing:0.43px;">Свидетелство за управление на МПС</div>
<div class="t" style="left:339.8px;top:52.1px;font-size:8.7px;color:#f0a3bb;letter-spacing:0.18px;">Permiso de Conducción</div>
<div class="t" style="left:326.8px;top:63.3px;font-size:8.7px;color:#f0a3bb;letter-spacing:0.28px;">Řidičský průkaz · Kørekort</div>
<div class="t" style="left:337.8px;top:74.5px;font-size:8.7px;color:#f0a3bb;letter-spacing:0.32px;">Führerschein · Juhiluba</div>
<div class="t" style="left:362.8px;top:85.7px;font-size:8.7px;color:#f0a3bb;letter-spacing:0.70px;">Άδεια Οδήγησης</div>
<div class="t" style="left:356.8px;top:96.9px;font-size:8.7px;color:#f0a3bb;letter-spacing:0.24px;">Permis de conduire</div>
<div class="t" style="left:356.8px;top:108.1px;font-size:8.7px;color:#f0a3bb;letter-spacing:0.24px;">Ceadúnas Tiomána</div>
<div class="t" style="left:368.8px;top:119.3px;font-size:8.7px;color:#f0a3bb;letter-spacing:0.27px;">Patente di guida</div>
<div class="t" style="left:362.8px;top:130.6px;font-size:8.7px;color:#f0a3bb;letter-spacing:0.26px;">Vadītāja apliecība</div>
<div class="t" style="left:337.8px;top:141.8px;font-size:8.7px;color:#f0a3bb;letter-spacing:0.30px;">Vairuotojo pažymėjimas</div>
<div class="t" style="left:364.8px;top:153.0px;font-size:8.7px;color:#f0a3bb;letter-spacing:0.32px;">Vezetői engedély</div>
<div class="t" style="left:347.8px;top:164.2px;font-size:8.7px;color:#f0a3bb;letter-spacing:0.43px;">Licenzja tas-Sewqan</div>
<div class="t" style="left:335.8px;top:175.4px;font-size:8.7px;color:#f0a3bb;letter-spacing:0.37px;">Rijbewijs · Prawo Jazdy</div>
<div class="t" style="left:358.8px;top:186.6px;font-size:8.7px;color:#f0a3bb;letter-spacing:0.10px;">Carta de Condução</div>
<div class="t" style="left:348.8px;top:197.8px;font-size:8.7px;color:#f0a3bb;letter-spacing:0.27px;">Permis de conducere</div>
<div class="t" style="left:364.8px;top:209.1px;font-size:8.7px;color:#f0a3bb;letter-spacing:0.22px;">Vodičský preukaz</div>
<div class="t" style="left:355.8px;top:220.3px;font-size:8.7px;color:#f0a3bb;letter-spacing:0.20px;">Vozniško dovoljenje</div>
<div class="t" style="left:400.8px;top:231.5px;font-size:8.7px;color:#f0a3bb;letter-spacing:0.45px;">Ajokortti</div>
<div class="t" style="left:208.3px;top:197.9px;font-size:8.7px;color:#f0a3bb;letter-spacing:0.11px;">Europeiska</div>
<div class="t" style="left:181.3px;top:209.3px;font-size:8.7px;color:#f0a3bb;letter-spacing:0.22px;">Gemenskapernas</div>
<div class="t" style="left:225.8px;top:220.7px;font-size:8.7px;color:#f0a3bb;letter-spacing:0.27px;">Modell</div>
<div class="abs" style="left:260.4px;top:199.3px;width:53px;height:32.6px;border-radius:9px;background:radial-gradient(ellipse at center,#e9e4e6 0%,#e0dadd 55%,#c9c2c6 100%);box-shadow:0 0 3px 1px rgba(120,105,112,.55), inset 0 0 3px rgba(90,80,85,.5);"></div>
<div class="t" style="left:267.4px;top:210.0px;font-size:12.2px;font-weight:bold;color:#2d2a2b;letter-spacing:0.06px;">123456</div>
<svg style="left:6.2px;top:103.2px;filter:blur(0.700px)" width="128" height="161" viewBox="0 0 128 161"><path d="M40 100L66 122 91 100 81 160H49z" fill="#ececed"/><path d="M0 160V121L39 100 48 118 57 160z" fill="#4e4f52"/><path d="M128 160V119.500L90.500 100.500 84 118 75 160z" fill="#4e4f52"/><path d="M60 126h12l3 7-5 5 4 22H58l4-22-5-5z" fill="#3a3b3e"/><path d="M34 56C34 36 46 26 66 26S98 36 98 56C98 80 90 100 80 108 72 114 60 114 52 108 42 100 34 80 34 56z" fill="#c2c2c3"/><path d="M36 70C38 92 46 104 54 109 62 114 72 114 79 109 88 102 95 90 97 70 94 84 88 92 80 94 72 88 60 88 52 94 44 92 39 84 36 70z" fill="#6e6e70"/><path d="M53 87C58 84 74 84 79 87 74 89 58 89 53 87z" fill="#4c4c4e"/><path d="M30 62C22 40 28 12 52 4 72-3 98 4 98 30 101 44 99 54 97 62 95 48 90 38 84 32 70 36 50 34 42 38 36 46 33 54 30 62z" fill="#3b3c3f"/><ellipse cx="52" cy="62" rx="4.500" ry="2" fill="#3a3a3c"/><ellipse cx="80" cy="62" rx="4.500" ry="2" fill="#3a3a3c"/><path d="M44 55q8-4 15 0M73 55q8-4 15 0" fill="none" stroke="#444" stroke-width="2"/></svg>
<div class="t" style="left:151.5px;top:261.3px;font-size:11.6px;font-weight:bold;color:#2a2626;">9.</div>
<div class="t" style="left:173.5px;top:258.0px;font-size:15.2px;font-weight:bold;color:#2a2626;letter-spacing:1.39px;">AM/B</div>
<div class="t" style="left:296.6px;top:256.2px;font-size:16.4px;font-style:italic;color:#3c3a3b;letter-spacing:2.80px;">AM</div>
<svg style="left:331.6px;top:246.5px" width="25" height="24" viewBox="0 0 25 24"><path d="M0 0.400V17L9.400 8.600zM11.400 0H23.400V12zM5.400 23H22.400L14 14.600z" fill="#4a4546"/></svg>
<div class="t" style="left:362.9px;top:246.5px;font-size:10.7px;font-weight:bold;color:#3f3c3d;letter-spacing:0.87px;">TRANSPORT</div>
<div class="t" style="left:362.9px;top:259.8px;font-size:10.7px;font-weight:bold;color:#3f3c3d;letter-spacing:1.16px;">STYRELSEN</div>
</div>
<div class="abs" style="left:154.6px;top:361.8px;width:454px;height:285.8px;border-radius:13px;overflow:hidden;background:#fdfcfd;box-shadow:0 0 1px rgba(190,170,180,.8)">
<svg style="left:0;top:0" width="454" height="285.8"><path d="M0 0H454V206C400 214 330 200 250 208C190 214 150 196 120 206C80 218 40 210 0 222z" fill="#f7ecf1"/><rect x="22" y="36" width="3.2" height="178" fill="#f0d6e0" opacity="0.5"/><rect x="31" y="36" width="3.2" height="178" fill="#f0d6e0" opacity="0.5"/><rect x="40" y="36" width="3.2" height="178" fill="#f0d6e0" opacity="0.5"/><rect x="49" y="36" width="3.2" height="178" fill="#f0d6e0" opacity="0.5"/><rect x="58" y="36" width="3.2" height="178" fill="#f0d6e0" opacity="0.5"/><rect x="67" y="36" width="3.2" height="178" fill="#f0d6e0" opacity="0.5"/><rect x="76" y="36" width="3.2" height="178" fill="#f0d6e0" opacity="0.5"/><rect x="85" y="36" width="3.2" height="178" fill="#f0d6e0" opacity="0.5"/><rect x="94" y="36" width="3.2" height="178" fill="#f0d6e0" opacity="0.5"/><rect x="103" y="36" width="3.2" height="178" fill="#f0d6e0" opacity="0.5"/><rect x="112" y="36" width="3.2" height="178" fill="#f0d6e0" opacity="0.5"/><rect x="121" y="36" width="3.2" height="178" fill="#f0d6e0" opacity="0.5"/><path d="M-4 4.0 q6 3.2 12 0 q6 -3.2 12 0 q6 3.2 12 0 q6 -3.2 12 0 q6 3.2 12 0 q6 -3.2 12 0 q6 3.2 12 0 q6 -3.2 12 0 q6 3.2 12 0 q6 -3.2 12 0 q6 3.2 12 0 q6 -3.2 12 0 q6 3.2 12 0 q6 -3.2 12 0 q6 3.2 12 0 q6 -3.2 12 0 q6 3.2 12 0 q6 -3.2 12 0 q6 3.2 12 0 q6 -3.2 12 0 q6 3.2 12 0 q6 -3.2 12 0 q6 3.2 12 0 q6 -3.2 12 0 q6 3.2 12 0 q6 -3.2 12 0 q6 3.2 12 0 q6 -3.2 12 0 q6 3.2 12 0 q6 -3.2 12 0 q6 3.2 12 0 q6 -3.2 12 0 q6 3.2 12 0 q6 -3.2 12 0 q6 3.2 12 0 q6 -3.2 12 0 q6 3.2 12 0 q6 -3.2 12 0 q6 3.2 12 0 q6 -3.2 12 0" fill="none" stroke="#e6bccb" stroke-width="0.45" opacity="0.65"/><path d="M-4 9.4 q6 -3.2 12 0 q6 3.2 12 0 q6 -3.2 12 0 q6 3.2 12 0 q6 -3.2 12 0 q6 3.2 12 0 q6 -3.2 12 0 q6 3.2 12 0 q6 -3.2 12 0 q6 3.2 12 0 q6 -3.2 12 0 q6 3.2 12 0 q6 -3.2 12 0 q6 3.2 12 0 q6 -3.2 12 0 q6 3.2 12 0 q6 -3.2 12 0 q6 3.2 12 0 q6 -3.2 12 0 q6 3.2 12 0 q6 -3.2 12 0 q6 3.2 12 0 q6 -3.2 12 0 q6 3.2 12 0 q6 -3.2 12 0 q6 3.2 12 0 q6 -3.2 12 0 q6 3.2 12 0 q6 -3.2 12 0 q6 3.2 12 0 q6 -3.2 12 0 q6 3.2 12 0 q6 -3.2 12 0 q6 3.2 12 0 q6 -3.2 12 0 q6 3.2 12 0 q6 -3.2 12 0 q6 3.2 12 0 q6 -3.2 12 0 q6 3.2 12 0" fill="none" stroke="#e6bccb" stroke-width="0.45" opacity="0.65"/><path d="M-4 14.8 q6 3.2 12 0 q6 -3.2 12 0 q6 3.2 12 0 q6 -3.2 12 0 q6 3.2 12 0 q6 -3.2 12 0 q6 3.2 12 0 q6 -3.2 12 0 q6 3.2 12 0 q6 -3.2 12 0 q6 3.2 12 0 q6 -3.2 12 0 q6 3.2 12 0 q6 -3.2 12 0 q6 3.2 12 0 q6 -3.2 12 0 q6 3.2 12 0 q6 -3.2 12 0 q6 3.2 12 0 q6 -3.2 12 0 q6 3.2 12 0 q6 -3.2 12 0 q6 3.2 12 0 q6 -3.2 12 0 q6 3.2 12 0 q6 -3.2 12 0 q6 3.2 12 0 q6 -3.2 12 0 q6 3.2 12 0 q6 -3.2 12 0 q6 3.2 12 0 q6 -3.2 12 0 q6 3.2 12 0 q6 -3.2 12 0 q6 3.2 12 0 q6 -3.2 12 0 q6 3.2 12 0 q6 -3.2 12 0 q6 3.2 12 0 q6 -3.2 12 0" fill="none" stroke="#e6bccb" stroke-width="0.45" opacity="0.65"/><path d="M-4 20.2 q6 -3.2 12 0 q6 3.2 12 0 q6 -3.2 12 0 q6 3.2 12 0 q6 -3.2 12 0 q6 3.2 12 0 q6 -3.2 12 0 q6 3.2 12 0 q6 -3.2 12 0 q6 3.2 12 0 q6 -3.2 12 0 q6 3.2 12 0 q6 -3.2 12 0 q6 3.2 12 0 q6 -3.2 12 0 q6 3.2 12 0 q6 -3.2 12 0 q6 3.2 12 0 q6 -3.2 12 0 q6 3.2 12 0 q6 -3.2 12 0 q6 3.2 12 0 q6 -3.2 12 0 q6 3.2 12 0 q6 -3.2 12 0 q6 3.2 12 0 q6 -3.2 12 0 q6 3.2 12 0 q6 -3.2 12 0 q6 3.2 12 0 q6 -3.2 12 0 q6 3.2 12 0 q6 -3.2 12 0 q6 3.2 12 0 q6 -3.2 12 0 q6 3.2 12 0 q6 -3.2 12 0 q6 3.2 12 0 q6 -3.2 12 0 q6 3.2 12 0" fill="none" stroke="#e6bccb" stroke-width="0.45" opacity="0.65"/><path d="M-4 25.6 q6 3.2 12 0 q6 -3.2 12 0 q6 3.2 12 0 q6 -3.2 12 0 q6 3.2 12 0 q6 -3.2 12 0 q6 3.2 12 0 q6 -3.2 12 0 q6 3.2 12 0 q6 -3.2 12 0 q6 3.2 12 0 q6 -3.2 12 0 q6 3.2 12 0 q6 -3.2 12 0 q6 3.2 12 0 q6 -3.2 12 0 q6 3.2 12 0 q6 -3.2 12 0 q6 3.2 12 0 q6 -3.2 12 0 q6 3.2 12 0 q6 -3.2 12 0 q6 3.2 12 0 q6 -3.2 12 0 q6 3.2 12 0 q6 -3.2 12 0 q6 3.2 12 0 q6 -3.2 12 0 q6 3.2 12 0 q6 -3.2 12 0 q6 3.2 12 0 q6 -3.2 12 0 q6 3.2 12 0 q6 -3.2 12 0 q6 3.2 12 0 q6 -3.2 12 0 q6 3.2 12 0 q6 -3.2 12 0 q6 3.2 12 0 q6 -3.2 12 0" fill="none" stroke="#e6bccb" stroke-width="0.45" opacity="0.65"/><path d="M-4 31.0 q6 -3.2 12 0 q6 3.2 12 0 q6 -3.2 12 0 q6 3.2 12 0 q6 -3.2 12 0 q6 3.2 12 0 q6 -3.2 12 0 q6 3.2 12 0 q6 -3.2 12 0 q6 3.2 12 0 q6 -3.2 12 0 q6 3.2 12 0 q6 -3.2 12 0 q6 3.2 12 0 q6 -3.2 12 0 q6 3.2 12 0 q6 -3.2 12 0 q6 3.2 12 0 q6 -3.2 12 0 q6 3.2 12 0 q6 -3.2 12 0 q6 3.2 12 0 q6 -3.2 12 0 q6 3.2 12 0 q6 -3.2 12 0 q6 3.2 12 0 q6 -3.2 12 0 q6 3.2 12 0 q6 -3.2 12 0 q6 3.2 12 0 q6 -3.2 12 0 q6 3.2 12 0 q6 -3.2 12 0 q6 3.2 12 0 q6 -3.2 12 0 q6 3.2 12 0 q6 -3.2 12 0 q6 3.2 12 0 q6 -3.2 12 0 q6 3.2 12 0" fill="none" stroke="#e6bccb" stroke-width="0.45" opacity="0.65"/><path d="M-4 36.4 q6 3.2 12 0 q6 -3.2 12 0 q6 3.2 12 0 q6 -3.2 12 0 q6 3.2 12 0 q6 -3.2 12 0 q6 3.2 12 0 q6 -3.2 12 0 q6 3.2 12 0 q6 -3.2 12 0 q6 3.2 12 0 q6 -3.2 12 0 q6 3.2 12 0 q6 -3.2 12 0 q6 3.2 12 0 q6 -3.2 12 0 q6 3.2 12 0 q6 -3.2 12 0 q6 3.2 12 0 q6 -3.2 12 0 q6 3.2 12 0 q6 -3.2 12 0 q6 3.2 12 0 q6 -3.2 12 0 q6 3.2 12 0 q6 -3.2 12 0 q6 3.2 12 0 q6 -3.2 12 0 q6 3.2 12 0 q6 -3.2 12 0 q6 3.2 12 0 q6 -3.2 12 0 q6 3.2 12 0 q6 -3.2 12 0 q6 3.2 12 0 q6 -3.2 12 0 q6 3.2 12 0 q6 -3.2 12 0 q6 3.2 12 0 q6 -3.2 12 0" fill="none" stroke="#e6bccb" stroke-width="0.45" opacity="0.65"/><path d="M-4 41.8 q6 -3.2 12 0 q6 3.2 12 0 q6 -3.2 12 0 q6 3.2 12 0 q6 -3.2 12 0 q6 3.2 12 0 q6 -3.2 12 0 q6 3.2 12 0 q6 -3.2 12 0 q6 3.2 12 0 q6 -3.2 12 0 q6 3.2 12 0 q6 -3.2 12 0 q6 3.2 12 0 q6 -3.2 12 0 q6 3.2 12 0 q6 -3.2 12 0 q6 3.2 12 0 q6 -3.2 12 0 q6 3.2 12 0 q6 -3.2 12 0 q6 3.2 12 0 q6 -3.2 12 0 q6 3.2 12 0 q6 -3.2 12 0 q6 3.2 12 0 q6 -3.2 12 0 q6 3.2 12 0 q6 -3.2 12 0 q6 3.2 12 0 q6 -3.2 12 0 q6 3.2 12 0 q6 -3.2 12 0 q6 3.2 12 0 q6 -3.2 12 0 q6 3.2 12 0 q6 -3.2 12 0 q6 3.2 12 0 q6 -3.2 12 0 q6 3.2 12 0" fill="none" stroke="#e6bccb" stroke-width="0.45" opacity="0.65"/><path d="M-4 47.2 q6 3.2 12 0 q6 -3.2 12 0 q6 3.2 12 0 q6 -3.2 12 0 q6 3.2 12 0 q6 -3.2 12 0 q6 3.2 12 0 q6 -3.2 12 0 q6 3.2 12 0 q6 -3.2 12 0 q6 3.2 12 0 q6 -3.2 12 0 q6 3.2 12 0 q6 -3.2 12 0 q6 3.2 12 0 q6 -3.2 12 0 q6 3.2 12 0 q6 -3.2 12 0 q6 3.2 12 0 q6 -3.2 12 0 q6 3.2 12 0 q6 -3.2 12 0 q6 3.2 12 0 q6 -3.2 12 0 q6 3.2 12 0 q6 -3.2 12 0 q6 3.2 12 0 q6 -3.2 12 0 q6 3.2 12 0 q6 -3.2 12 0 q6 3.2 12 0 q6 -3.2 12 0 q6 3.2 12 0 q6 -3.2 12 0 q6 3.2 12 0 q6 -3.2 12 0 q6 3.2 12 0 q6 -3.2 12 0 q6 3.2 12 0 q6 -3.2 12 0" fill="none" stroke="#e6bccb" stroke-width="0.45" opacity="0.65"/><path d="M-4 52.6 q6 -3.2 12 0 q6 3.2 12 0 q6 -3.2 12 0 q6 3.2 12 0 q6 -3.2 12 0 q6 3.2 12 0 q6 -3.2 12 0 q6 3.2 12 0 q6 -3.2 12 0 q6 3.2 12 0 q6 -3.2 12 0 q6 3.2 12 0 q6 -3.2 12 0 q6 3.2 12 0 q6 -3.2 12 0 q6 3.2 12 0 q6 -3.2 12 0 q6 3.2 12 0 q6 -3.2 12 0 q6 3.2 12 0 q6 -3.2 12 0 q6 3.2 12 0 q6 -3.2 12 0 q6 3.2 12 0 q6 -3.2 12 0 q6 3.2 12 0 q6 -3.2 12 0 q6 3.2 12 0 q6 -3.2 12 0 q6 3.2 12 0 q6 -3.2 12 0 q6 3.2 12 0 q6 -3.2 12 0 q6 3.2 12 0 q6 -3.2 12 0 q6 3.2 12 0 q6 -3.2 12 0 q6 3.2 12 0 q6 -3.2 12 0 q6 3.2 12 0" fill="none" stroke="#e6bccb" stroke-width="0.45" opacity="0.65"/><path d="M-4 58.0 q6 3.2 12 0 q6 -3.2 12 0 q6 3.2 12 0 q6 -3.2 12 0 q6 3.2 12 0 q6 -3.2 12 0 q6 3.2 12 0 q6 -3.2 12 0 q6 3.2 12 0 q6 -3.2 12 0 q6 3.2 12 0 q6 -3.2 12 0 q6 3.2 12 0 q6 -3.2 12 0 q6 3.2 12 0 q6 -3.2 12 0 q6 3.2 12 0 q6 -3.2 12 0 q6 3.2 12 0 q6 -3.2 12 0 q6 3.2 12 0 q6 -3.2 12 0 q6 3.2 12 0 q6 -3.2 12 0 q6 3.2 12 0 q6 -3.2 12 0 q6 3.2 12 0 q6 -3.2 12 0 q6 3.2 12 0 q6 -3.2 12 0 q6 3.2 12 0 q6 -3.2 12 0 q6 3.2 12 0 q6 -3.2 12 0 q6 3.2 12 0 q6 -3.2 12 0 q6 3.2 12 0 q6 -3.2 12 0 q6 3.2 12 0 q6 -3.2 12 0" fill="none" stroke="#e6bccb" stroke-width="0.45" opacity="0.65"/><path d="M-4 63.4 q6 -3.2 12 0 q6 3.2 12 0 q6 -3.2 12 0 q6 3.2 12 0 q6 -3.2 12 0 q6 3.2 12 0 q6 -3.2 12 0 q6 3.2 12 0 q6 -3.2 12 0 q6 3.2 12 0 q6 -3.2 12 0 q6 3.2 12 0 q6 -3.2 12 0 q6 3.2 12 0 q6 -3.2 12 0 q6 3.2 12 0 q6 -3.2 12 0 q6 3.2 12 0 q6 -3.2 12 0 q6 3.2 12 0 q6 -3.2 12 0 q6 3.2 12 0 q6 -3.2 12 0 q6 3.2 12 0 q6 -3.2 12 0 q6 3.2 12 0 q6 -3.2 12 0 q6 3.2 12 0 q6 -3.2 12 0 q6 3.2 12 0 q6 -3.2 12 0 q6 3.2 12 0 q6 -3.2 12 0 q6 3.2 12 0 q6 -3.2 12 0 q6 3.2 12 0 q6 -3.2 12 0 q6 3.2 12 0 q6 -3.2 12 0 q6 3.2 12 0" fill="none" stroke="#e6bccb" stroke-width="0.45" opacity="0.65"/><path d="M-4 68.8 q6 3.2 12 0 q6 -3.2 12 0 q6 3.2 12 0 q6 -3.2 12 0 q6 3.2 12 0 q6 -3.2 12 0 q6 3.2 12 0 q6 -3.2 12 0 q6 3.2 12 0 q6 -3.2 12 0 q6 3.2 12 0 q6 -3.2 12 0 q6 3.2 12 0 q6 -3.2 12 0 q6 3.2 12 0 q6 -3.2 12 0 q6 3.2 12 0 q6 -3.2 12 0 q6 3.2 12 0 q6 -3.2 12 0 q6 3.2 12 0 q6 -3.2 12 0 q6 3.2 12 0 q6 -3.2 12 0 q6 3.2 12 0 q6 -3.2 12 0 q6 3.2 12 0 q6 -3.2 12 0 q6 3.2 12 0 q6 -3.2 12 0 q6 3.2 12 0 q6 -3.2 12 0 q6 3.2 12 0 q6 -3.2 12 0 q6 3.2 12 0 q6 -3.2 12 0 q6 3.2 12 0 q6 -3.2 12 0 q6 3.2 12 0 q6 -3.2 12 0" fill="none" stroke="#e6bccb" stroke-width="0.45" opacity="0.65"/><path d="M-4 74.2 q6 -3.2 12 0 q6 3.2 12 0 q6 -3.2 12 0 q6 3.2 12 0 q6 -3.2 12 0 q6 3.2 12 0 q6 -3.2 12 0 q6 3.2 12 0 q6 -3.2 12 0 q6 3.2 12 0 q6 -3.2 12 0 q6 3.2 12 0 q6 -3.2 12 0 q6 3.2 12 0 q6 -3.2 12 0 q6 3.2 12 0 q6 -3.2 12 0 q6 3.2 12 0 q6 -3.2 12 0 q6 3.2 12 0 q6 -3.2 12 0 q6 3.2 12 0 q6 -3.2 12 0 q6 3.2 12 0 q6 -3.2 12 0 q6 3.2 12 0 q6 -3.2 12 0 q6 3.2 12 0 q6 -3.2 12 0 q6 3.2 12 0 q6 -3.2 12 0 q6 3.2 12 0 q6 -3.2 12 0 q6 3.2 12 0 q6 -3.2 12 0 q6 3.2 12 0 q6 -3.2 12 0 q6 3.2 12 0 q6 -3.2 12 0 q6 3.2 12 0" fill="none" stroke="#e6bccb" stroke-width="0.45" opacity="0.65"/><path d="M-4 79.6 q6 3.2 12 0 q6 -3.2 12 0 q6 3.2 12 0 q6 -3.2 12 0 q6 3.2 12 0 q6 -3.2 12 0 q6 3.2 12 0 q6 -3.2 12 0 q6 3.2 12 0 q6 -3.2 12 0 q6 3.2 12 0 q6 -3.2 12 0 q6 3.2 12 0 q6 -3.2 12 0 q6 3.2 12 0 q6 -3.2 12 0 q6 3.2 12 0 q6 -3.2 12 0 q6 3.2 12 0 q6 -3.2 12 0 q6 3.2 12 0 q6 -3.2 12 0 q6 3.2 12 0 q6 -3.2 12 0 q6 3.2 12 0 q6 -3.2 12 0 q6 3.2 12 0 q6 -3.2 12 0 q6 3.2 12 0 q6 -3.2 12 0 q6 3.2 12 0 q6 -3.2 12 0 q6 3.2 12 0 q6 -3.2 12 0 q6 3.2 12 0 q6 -3.2 12 0 q6 3.2 12 0 q6 -3.2 12 0 q6 3.2 12 0 q6 -3.2 12 0" fill="none" stroke="#e6bccb" stroke-width="0.45" opacity="0.65"/><path d="M-4 85.0 q6 -3.2 12 0 q6 3.2 12 0 q6 -3.2 12 0 q6 3.2 12 0 q6 -3.2 12 0 q6 3.2 12 0 q6 -3.2 12 0 q6 3.2 12 0 q6 -3.2 12 0 q6 3.2 12 0 q6 -3.2 12 0 q6 3.2 12 0 q6 -3.2 12 0 q6 3.2 12 0 q6 -3.2 12 0 q6 3.2 12 0 q6 -3.2 12 0 q6 3.2 12 0 q6 -3.2 12 0 q6 3.2 12 0 q6 -3.2 12 0 q6 3.2 12 0 q6 -3.2 12 0 q6 3.2 12 0 q6 -3.2 12 0 q6 3.2 12 0 q6 -3.2 12 0 q6 3.2 12 0 q6 -3.2 12 0 q6 3.2 12 0 q6 -3.2 12 0 q6 3.2 12 0 q6 -3.2 12 0 q6 3.2 12 0 q6 -3.2 12 0 q6 3.2 12 0 q6 -3.2 12 0 q6 3.2 12 0 q6 -3.2 12 0 q6 3.2 12 0" fill="none" stroke="#e6bccb" stroke-width="0.45" opacity="0.65"/><path d="M-4 90.4 q6 3.2 12 0 q6 -3.2 12 0 q6 3.2 12 0 q6 -3.2 12 0 q6 3.2 12 0 q6 -3.2 12 0 q6 3.2 12 0 q6 -3.2 12 0 q6 3.2 12 0 q6 -3.2 12 0 q6 3.2 12 0 q6 -3.2 12 0 q6 3.2 12 0 q6 -3.2 12 0 q6 3.2 12 0 q6 -3.2 12 0 q6 3.2 12 0 q6 -3.2 12 0 q6 3.2 12 0 q6 -3.2 12 0 q6 3.2 12 0 q6 -3.2 12 0 q6 3.2 12 0 q6 -3.2 12 0 q6 3.2 12 0 q6 -3.2 12 0 q6 3.2 12 0 q6 -3.2 12 0 q6 3.2 12 0 q6 -3.2 12 0 q6 3.2 12 0 q6 -3.2 12 0 q6 3.2 12 0 q6 -3.2 12 0 q6 3.2 12 0 q6 -3.2 12 0 q6 3.2 12 0 q6 -3.2 12 0 q6 3.2 12 0 q6 -3.2 12 0" fill="none" stroke="#e6bccb" stroke-width="0.45" opacity="0.65"/><path d="M-4 95.8 q6 -3.2 12 0 q6 3.2 12 0 q6 -3.2 12 0 q6 3.2 12 0 q6 -3.2 12 0 q6 3.2 12 0 q6 -3.2 12 0 q6 3.2 12 0 q6 -3.2 12 0 q6 3.2 12 0 q6 -3.2 12 0 q6 3.2 12 0 q6 -3.2 12 0 q6 3.2 12 0 q6 -3.2 12 0 q6 3.2 12 0 q6 -3.2 12 0 q6 3.2 12 0 q6 -3.2 12 0 q6 3.2 12 0 q6 -3.2 12 0 q6 3.2 12 0 q6 -3.2 12 0 q6 3.2 12 0 q6 -3.2 12 0 q6 3.2 12 0 q6 -3.2 12 0 q6 3.2 12 0 q6 -3.2 12 0 q6 3.2 12 0 q6 -3.2 12 0 q6 3.2 12 0 q6 -3.2 12 0 q6 3.2 12 0 q6 -3.2 12 0 q6 3.2 12 0 q6 -3.2 12 0 q6 3.2 12 0 q6 -3.2 12 0 q6 3.2 12 0" fill="none" stroke="#e6bccb" stroke-width="0.45" opacity="0.65"/><path d="M-4 101.2 q6 3.2 12 0 q6 -3.2 12 0 q6 3.2 12 0 q6 -3.2 12 0 q6 3.2 12 0 q6 -3.2 12 0 q6 3.2 12 0 q6 -3.2 12 0 q6 3.2 12 0 q6 -3.2 12 0 q6 3.2 12 0 q6 -3.2 12 0 q6 3.2 12 0 q6 -3.2 12 0 q6 3.2 12 0 q6 -3.2 12 0 q6 3.2 12 0 q6 -3.2 12 0 q6 3.2 12 0 q6 -3.2 12 0 q6 3.2 12 0 q6 -3.2 12 0 q6 3.2 12 0 q6 -3.2 12 0 q6 3.2 12 0 q6 -3.2 12 0 q6 3.2 12 0 q6 -3.2 12 0 q6 3.2 12 0 q6 -3.2 12 0 q6 3.2 12 0 q6 -3.2 12 0 q6 3.2 12 0 q6 -3.2 12 0 q6 3.2 12 0 q6 -3.2 12 0 q6 3.2 12 0 q6 -3.2 12 0 q6 3.2 12 0 q6 -3.2 12 0" fill="none" stroke="#e6bccb" stroke-width="0.45" opacity="0.65"/><path d="M-4 106.6 q6 -3.2 12 0 q6 3.2 12 0 q6 -3.2 12 0 q6 3.2 12 0 q6 -3.2 12 0 q6 3.2 12 0 q6 -3.2 12 0 q6 3.2 12 0 q6 -3.2 12 0 q6 3.2 12 0 q6 -3.2 12 0 q6 3.2 12 0 q6 -3.2 12 0 q6 3.2 12 0 q6 -3.2 12 0 q6 3.2 12 0 q6 -3.2 12 0 q6 3.2 12 0 q6 -3.2 12 0 q6 3.2 12 0 q6 -3.2 12 0 q6 3.2 12 0 q6 -3.2 12 0 q6 3.2 12 0 q6 -3.2 12 0 q6 3.2 12 0 q6 -3.2 12 0 q6 3.2 12 0 q6 -3.2 12 0 q6 3.2 12 0 q6 -3.2 12 0 q6 3.2 12 0 q6 -3.2 12 0 q6 3.2 12 0 q6 -3.2 12 0 q6 3.2 12 0 q6 -3.2 12 0 q6 3.2 12 0 q6 -3.2 12 0 q6 3.2 12 0" fill="none" stroke="#e6bccb" stroke-width="0.45" opacity="0.65"/><path d="M-4 112.0 q6 3.2 12 0 q6 -3.2 12 0 q6 3.2 12 0 q6 -3.2 12 0 q6 3.2 12 0 q6 -3.2 12 0 q6 3.2 12 0 q6 -3.2 12 0 q6 3.2 12 0 q6 -3.2 12 0 q6 3.2 12 0 q6 -3.2 12 0 q6 3.2 12 0 q6 -3.2 12 0 q6 3.2 12 0 q6 -3.2 12 0 q6 3.2 12 0 q6 -3.2 12 0 q6 3.2 12 0 q6 -3.2 12 0 q6 3.2 12 0 q6 -3.2 12 0 q6 3.2 12 0 q6 -3.2 12 0 q6 3.2 12 0 q6 -3.2 12 0 q6 3.2 12 0 q6 -3.2 12 0 q6 3.2 12 0 q6 -3.2 12 0 q6 3.2 12 0 q6 -3.2 12 0 q6 3.2 12 0 q6 -3.2 12 0 q6 3.2 12 0 q6 -3.2 12 0 q6 3.2 12 0 q6 -3.2 12 0 q6 3.2 12 0 q6 -3.2 12 0" fill="none" stroke="#e6bccb" stroke-width="0.45" opacity="0.65"/><path d="M-4 117.4 q6 -3.2 12 0 q6 3.2 12 0 q6 -3.2 12 0 q6 3.2 12 0 q6 -3.2 12 0 q6 3.2 12 0 q6 -3.2 12 0 q6 3.2 12 0 q6 -3.2 12 0 q6 3.2 12 0 q6 -3.2 12 0 q6 3.2 12 0 q6 -3.2 12 0 q6 3.2 12 0 q6 -3.2 12 0 q6 3.2 12 0 q6 -3.2 12 0 q6 3.2 12 0 q6 -3.2 12 0 q6 3.2 12 0 q6 -3.2 12 0 q6 3.2 12 0 q6 -3.2 12 0 q6 3.2 12 0 q6 -3.2 12 0 q6 3.2 12 0 q6 -3.2 12 0 q6 3.2 12 0 q6 -3.2 12 0 q6 3.2 12 0 q6 -3.2 12 0 q6 3.2 12 0 q6 -3.2 12 0 q6 3.2 12 0 q6 -3.2 12 0 q6 3.2 12 0 q6 -3.2 12 0 q6 3.2 12 0 q6 -3.2 12 0 q6 3.2 12 0" fill="none" stroke="#e6bccb" stroke-width="0.45" opacity="0.65"/><path d="M-4 122.8 q6 3.2 12 0 q6 -3.2 12 0 q6 3.2 12 0 q6 -3.2 12 0 q6 3.2 12 0 q6 -3.2 12 0 q6 3.2 12 0 q6 -3.2 12 0 q6 3.2 12 0 q6 -3.2 12 0 q6 3.2 12 0 q6 -3.2 12 0 q6 3.2 12 0 q6 -3.2 12 0 q6 3.2 12 0 q6 -3.2 12 0 q6 3.2 12 0 q6 -3.2 12 0 q6 3.2 12 0 q6 -3.2 12 0 q6 3.2 12 0 q6 -3.2 12 0 q6 3.2 12 0 q6 -3.2 12 0 q6 3.2 12 0 q6 -3.2 12 0 q6 3.2 12 0 q6 -3.2 12 0 q6 3.2 12 0 q6 -3.2 12 0 q6 3.2 12 0 q6 -3.2 12 0 q6 3.2 12 0 q6 -3.2 12 0 q6 3.2 12 0 q6 -3.2 12 0 q6 3.2 12 0 q6 -3.2 12 0 q6 3.2 12 0 q6 -3.2 12 0" fill="none" stroke="#e6bccb" stroke-width="0.45" opacity="0.65"/><path d="M-4 128.2 q6 -3.2 12 0 q6 3.2 12 0 q6 -3.2 12 0 q6 3.2 12 0 q6 -3.2 12 0 q6 3.2 12 0 q6 -3.2 12 0 q6 3.2 12 0 q6 -3.2 12 0 q6 3.2 12 0 q6 -3.2 12 0 q6 3.2 12 0 q6 -3.2 12 0 q6 3.2 12 0 q6 -3.2 12 0 q6 3.2 12 0 q6 -3.2 12 0 q6 3.2 12 0 q6 -3.2 12 0 q6 3.2 12 0 q6 -3.2 12 0 q6 3.2 12 0 q6 -3.2 12 0 q6 3.2 12 0 q6 -3.2 12 0 q6 3.2 12 0 q6 -3.2 12 0 q6 3.2 12 0 q6 -3.2 12 0 q6 3.2 12 0 q6 -3.2 12 0 q6 3.2 12 0 q6 -3.2 12 0 q6 3.2 12 0 q6 -3.2 12 0 q6 3.2 12 0 q6 -3.2 12 0 q6 3.2 12 0 q6 -3.2 12 0 q6 3.2 12 0" fill="none" stroke="#e6bccb" stroke-width="0.45" opacity="0.65"/><path d="M-4 133.6 q6 3.2 12 0 q6 -3.2 12 0 q6 3.2 12 0 q6 -3.2 12 0 q6 3.2 12 0 q6 -3.2 12 0 q6 3.2 12 0 q6 -3.2 12 0 q6 3.2 12 0 q6 -3.2 12 0 q6 3.2 12 0 q6 -3.2 12 0 q6 3.2 12 0 q6 -3.2 12 0 q6 3.2 12 0 q6 -3.2 12 0 q6 3.2 12 0 q6 -3.2 12 0 q6 3.2 12 0 q6 -3.2 12 0 q6 3.2 12 0 q6 -3.2 12 0 q6 3.2 12 0 q6 -3.2 12 0 q6 3.2 12 0 q6 -3.2 12 0 q6 3.2 12 0 q6 -3.2 12 0 q6 3.2 12 0 q6 -3.2 12 0 q6 3.2 12 0 q6 -3.2 12 0 q6 3.2 12 0 q6 -3.2 12 0 q6 3.2 12 0 q6 -3.2 12 0 q6 3.2 12 0 q6 -3.2 12 0 q6 3.2 12 0 q6 -3.2 12 0" fill="none" stroke="#e6bccb" stroke-width="0.45" opacity="0.65"/><path d="M-4 139.0 q6 -3.2 12 0 q6 3.2 12 0 q6 -3.2 12 0 q6 3.2 12 0 q6 -3.2 12 0 q6 3.2 12 0 q6 -3.2 12 0 q6 3.2 12 0 q6 -3.2 12 0 q6 3.2 12 0 q6 -3.2 12 0 q6 3.2 12 0 q6 -3.2 12 0 q6 3.2 12 0 q6 -3.2 12 0 q6 3.2 12 0 q6 -3.2 12 0 q6 3.2 12 0 q6 -3.2 12 0 q6 3.2 12 0 q6 -3.2 12 0 q6 3.2 12 0 q6 -3.2 12 0 q6 3.2 12 0 q6 -3.2 12 0 q6 3.2 12 0 q6 -3.2 12 0 q6 3.2 12 0 q6 -3.2 12 0 q6 3.2 12 0 q6 -3.2 12 0 q6 3.2 12 0 q6 -3.2 12 0 q6 3.2 12 0 q6 -3.2 12 0 q6 3.2 12 0 q6 -3.2 12 0 q6 3.2 12 0 q6 -3.2 12 0 q6 3.2 12 0" fill="none" stroke="#e6bccb" stroke-width="0.45" opacity="0.65"/><path d="M-4 144.4 q6 3.2 12 0 q6 -3.2 12 0 q6 3.2 12 0 q6 -3.2 12 0 q6 3.2 12 0 q6 -3.2 12 0 q6 3.2 12 0 q6 -3.2 12 0 q6 3.2 12 0 q6 -3.2 12 0 q6 3.2 12 0 q6 -3.2 12 0 q6 3.2 12 0 q6 -3.2 12 0 q6 3.2 12 0 q6 -3.2 12 0 q6 3.2 12 0 q6 -3.2 12 0 q6 3.2 12 0 q6 -3.2 12 0 q6 3.2 12 0 q6 -3.2 12 0 q6 3.2 12 0 q6 -3.2 12 0 q6 3.2 12 0 q6 -3.2 12 0 q6 3.2 12 0 q6 -3.2 12 0 q6 3.2 12 0 q6 -3.2 12 0 q6 3.2 12 0 q6 -3.2 12 0 q6 3.2 12 0 q6 -3.2 12 0 q6 3.2 12 0 q6 -3.2 12 0 q6 3.2 12 0 q6 -3.2 12 0 q6 3.2 12 0 q6 -3.2 12 0" fill="none" stroke="#e6bccb" stroke-width="0.45" opacity="0.65"/><path d="M-4 149.8 q6 -3.2 12 0 q6 3.2 12 0 q6 -3.2 12 0 q6 3.2 12 0 q6 -3.2 12 0 q6 3.2 12 0 q6 -3.2 12 0 q6 3.2 12 0 q6 -3.2 12 0 q6 3.2 12 0 q6 -3.2 12 0 q6 3.2 12 0 q6 -3.2 12 0 q6 3.2 12 0 q6 -3.2 12 0 q6 3.2 12 0 q6 -3.2 12 0 q6 3.2 12 0 q6 -3.2 12 0 q6 3.2 12 0 q6 -3.2 12 0 q6 3.2 12 0 q6 -3.2 12 0 q6 3.2 12 0 q6 -3.2 12 0 q6 3.2 12 0 q6 -3.2 12 0 q6 3.2 12 0 q6 -3.2 12 0 q6 3.2 12 0 q6 -3.2 12 0 q6 3.2 12 0 q6 -3.2 12 0 q6 3.2 12 0 q6 -3.2 12 0 q6 3.2 12 0 q6 -3.2 12 0 q6 3.2 12 0 q6 -3.2 12 0 q6 3.2 12 0" fill="none" stroke="#e6bccb" stroke-width="0.45" opacity="0.65"/><path d="M-4 155.2 q6 3.2 12 0 q6 -3.2 12 0 q6 3.2 12 0 q6 -3.2 12 0 q6 3.2 12 0 q6 -3.2 12 0 q6 3.2 12 0 q6 -3.2 12 0 q6 3.2 12 0 q6 -3.2 12 0 q6 3.2 12 0 q6 -3.2 12 0 q6 3.2 12 0 q6 -3.2 12 0 q6 3.2 12 0 q6 -3.2 12 0 q6 3.2 12 0 q6 -3.2 12 0 q6 3.2 12 0 q6 -3.2 12 0 q6 3.2 12 0 q6 -3.2 12 0 q6 3.2 12 0 q6 -3.2 12 0 q6 3.2 12 0 q6 -3.2 12 0 q6 3.2 12 0 q6 -3.2 12 0 q6 3.2 12 0 q6 -3.2 12 0 q6 3.2 12 0 q6 -3.2 12 0 q6 3.2 12 0 q6 -3.2 12 0 q6 3.2 12 0 q6 -3.2 12 0 q6 3.2 12 0 q6 -3.2 12 0 q6 3.2 12 0 q6 -3.2 12 0" fill="none" stroke="#e6bccb" stroke-width="0.45" opacity="0.65"/><path d="M-4 160.6 q6 -3.2 12 0 q6 3.2 12 0 q6 -3.2 12 0 q6 3.2 12 0 q6 -3.2 12 0 q6 3.2 12 0 q6 -3.2 12 0 q6 3.2 12 0 q6 -3.2 12 0 q6 3.2 12 0 q6 -3.2 12 0 q6 3.2 12 0 q6 -3.2 12 0 q6 3.2 12 0 q6 -3.2 12 0 q6 3.2 12 0 q6 -3.2 12 0 q6 3.2 12 0 q6 -3.2 12 0 q6 3.2 12 0 q6 -3.2 12 0 q6 3.2 12 0 q6 -3.2 12 0 q6 3.2 12 0 q6 -3.2 12 0 q6 3.2 12 0 q6 -3.2 12 0 q6 3.2 12 0 q6 -3.2 12 0 q6 3.2 12 0 q6 -3.2 12 0 q6 3.2 12 0 q6 -3.2 12 0 q6 3.2 12 0 q6 -3.2 12 0 q6 3.2 12 0 q6 -3.2 12 0 q6 3.2 12 0 q6 -3.2 12 0 q6 3.2 12 0" fill="none" stroke="#e6bccb" stroke-width="0.45" opacity="0.65"/><path d="M-4 166.0 q6 3.2 12 0 q6 -3.2 12 0 q6 3.2 12 0 q6 -3.2 12 0 q6 3.2 12 0 q6 -3.2 12 0 q6 3.2 12 0 q6 -3.2 12 0 q6 3.2 12 0 q6 -3.2 12 0 q6 3.2 12 0 q6 -3.2 12 0 q6 3.2 12 0 q6 -3.2 12 0 q6 3.2 12 0 q6 -3.2 12 0 q6 3.2 12 0 q6 -3.2 12 0 q6 3.2 12 0 q6 -3.2 12 0 q6 3.2 12 0 q6 -3.2 12 0 q6 3.2 12 0 q6 -3.2 12 0 q6 3.2 12 0 q6 -3.2 12 0 q6 3.2 12 0 q6 -3.2 12 0 q6 3.2 12 0 q6 -3.2 12 0 q6 3.2 12 0 q6 -3.2 12 0 q6 3.2 12 0 q6 -3.2 12 0 q6 3.2 12 0 q6 -3.2 12 0 q6 3.2 12 0 q6 -3.2 12 0 q6 3.2 12 0 q6 -3.2 12 0" fill="none" stroke="#e6bccb" stroke-width="0.45" opacity="0.65"/><path d="M-4 171.4 q6 -3.2 12 0 q6 3.2 12 0 q6 -3.2 12 0 q6 3.2 12 0 q6 -3.2 12 0 q6 3.2 12 0 q6 -3.2 12 0 q6 3.2 12 0 q6 -3.2 12 0 q6 3.2 12 0 q6 -3.2 12 0 q6 3.2 12 0 q6 -3.2 12 0 q6 3.2 12 0 q6 -3.2 12 0 q6 3.2 12 0 q6 -3.2 12 0 q6 3.2 12 0 q6 -3.2 12 0 q6 3.2 12 0 q6 -3.2 12 0 q6 3.2 12 0 q6 -3.2 12 0 q6 3.2 12 0 q6 -3.2 12 0 q6 3.2 12 0 q6 -3.2 12 0 q6 3.2 12 0 q6 -3.2 12 0 q6 3.2 12 0 q6 -3.2 12 0 q6 3.2 12 0 q6 -3.2 12 0 q6 3.2 12 0 q6 -3.2 12 0 q6 3.2 12 0 q6 -3.2 12 0 q6 3.2 12 0 q6 -3.2 12 0 q6 3.2 12 0" fill="none" stroke="#e6bccb" stroke-width="0.45" opacity="0.65"/><path d="M-4 176.8 q6 3.2 12 0 q6 -3.2 12 0 q6 3.2 12 0 q6 -3.2 12 0 q6 3.2 12 0 q6 -3.2 12 0 q6 3.2 12 0 q6 -3.2 12 0 q6 3.2 12 0 q6 -3.2 12 0 q6 3.2 12 0 q6 -3.2 12 0 q6 3.2 12 0 q6 -3.2 12 0 q6 3.2 12 0 q6 -3.2 12 0 q6 3.2 12 0 q6 -3.2 12 0 q6 3.2 12 0 q6 -3.2 12 0 q6 3.2 12 0 q6 -3.2 12 0 q6 3.2 12 0 q6 -3.2 12 0 q6 3.2 12 0 q6 -3.2 12 0 q6 3.2 12 0 q6 -3.2 12 0 q6 3.2 12 0 q6 -3.2 12 0 q6 3.2 12 0 q6 -3.2 12 0 q6 3.2 12 0 q6 -3.2 12 0 q6 3.2 12 0 q6 -3.2 12 0 q6 3.2 12 0 q6 -3.2 12 0 q6 3.2 12 0 q6 -3.2 12 0" fill="none" stroke="#e6bccb" stroke-width="0.45" opacity="0.65"/><path d="M-4 182.2 q6 -3.2 12 0 q6 3.2 12 0 q6 -3.2 12 0 q6 3.2 12 0 q6 -3.2 12 0 q6 3.2 12 0 q6 -3.2 12 0 q6 3.2 12 0 q6 -3.2 12 0 q6 3.2 12 0 q6 -3.2 12 0 q6 3.2 12 0 q6 -3.2 12 0 q6 3.2 12 0 q6 -3.2 12 0 q6 3.2 12 0 q6 -3.2 12 0 q6 3.2 12 0 q6 -3.2 12 0 q6 3.2 12 0 q6 -3.2 12 0 q6 3.2 12 0 q6 -3.2 12 0 q6 3.2 12 0 q6 -3.2 12 0 q6 3.2 12 0 q6 -3.2 12 0 q6 3.2 12 0 q6 -3.2 12 0 q6 3.2 12 0 q6 -3.2 12 0 q6 3.2 12 0 q6 -3.2 12 0 q6 3.2 12 0 q6 -3.2 12 0 q6 3.2 12 0 q6 -3.2 12 0 q6 3.2 12 0 q6 -3.2 12 0 q6 3.2 12 0" fill="none" stroke="#e6bccb" stroke-width="0.45" opacity="0.65"/><path d="M-4 187.6 q6 3.2 12 0 q6 -3.2 12 0 q6 3.2 12 0 q6 -3.2 12 0 q6 3.2 12 0 q6 -3.2 12 0 q6 3.2 12 0 q6 -3.2 12 0 q6 3.2 12 0 q6 -3.2 12 0 q6 3.2 12 0 q6 -3.2 12 0 q6 3.2 12 0 q6 -3.2 12 0 q6 3.2 12 0 q6 -3.2 12 0 q6 3.2 12 0 q6 -3.2 12 0 q6 3.2 12 0 q6 -3.2 12 0 q6 3.2 12 0 q6 -3.2 12 0 q6 3.2 12 0 q6 -3.2 12 0 q6 3.2 12 0 q6 -3.2 12 0 q6 3.2 12 0 q6 -3.2 12 0 q6 3.2 12 0 q6 -3.2 12 0 q6 3.2 12 0 q6 -3.2 12 0 q6 3.2 12 0 q6 -3.2 12 0 q6 3.2 12 0 q6 -3.2 12 0 q6 3.2 12 0 q6 -3.2 12 0 q6 3.2 12 0 q6 -3.2 12 0" fill="none" stroke="#e6bccb" stroke-width="0.45" opacity="0.65"/><path d="M-4 193.0 q6 -3.2 12 0 q6 3.2 12 0 q6 -3.2 12 0 q6 3.2 12 0 q6 -3.2 12 0 q6 3.2 12 0 q6 -3.2 12 0 q6 3.2 12 0 q6 -3.2 12 0 q6 3.2 12 0 q6 -3.2 12 0 q6 3.2 12 0 q6 -3.2 12 0 q6 3.2 12 0 q6 -3.2 12 0 q6 3.2 12 0 q6 -3.2 12 0 q6 3.2 12 0 q6 -3.2 12 0 q6 3.2 12 0 q6 -3.2 12 0 q6 3.2 12 0 q6 -3.2 12 0 q6 3.2 12 0 q6 -3.2 12 0 q6 3.2 12 0 q6 -3.2 12 0 q6 3.2 12 0 q6 -3.2 12 0 q6 3.2 12 0 q6 -3.2 12 0 q6 3.2 12 0 q6 -3.2 12 0 q6 3.2 12 0 q6 -3.2 12 0 q6 3.2 12 0 q6 -3.2 12 0 q6 3.2 12 0 q6 -3.2 12 0 q6 3.2 12 0" fill="none" stroke="#e6bccb" stroke-width="0.45" opacity="0.65"/><path d="M-4 198.4 q6 3.2 12 0 q6 -3.2 12 0 q6 3.2 12 0 q6 -3.2 12 0 q6 3.2 12 0 q6 -3.2 12 0 q6 3.2 12 0 q6 -3.2 12 0 q6 3.2 12 0 q6 -3.2 12 0 q6 3.2 12 0 q6 -3.2 12 0 q6 3.2 12 0 q6 -3.2 12 0 q6 3.2 12 0 q6 -3.2 12 0 q6 3.2 12 0 q6 -3.2 12 0 q6 3.2 12 0 q6 -3.2 12 0 q6 3.2 12 0 q6 -3.2 12 0 q6 3.2 12 0 q6 -3.2 12 0 q6 3.2 12 0 q6 -3.2 12 0 q6 3.2 12 0 q6 -3.2 12 0 q6 3.2 12 0 q6 -3.2 12 0 q6 3.2 12 0 q6 -3.2 12 0 q6 3.2 12 0 q6 -3.2 12 0 q6 3.2 12 0 q6 -3.2 12 0 q6 3.2 12 0 q6 -3.2 12 0 q6 3.2 12 0 q6 -3.2 12 0" fill="none" stroke="#e6bccb" stroke-width="0.45" opacity="0.65"/><path d="M-4 203.8 q6 -3.2 12 0 q6 3.2 12 0 q6 -3.2 12 0 q6 3.2 12 0 q6 -3.2 12 0 q6 3.2 12 0 q6 -3.2 12 0 q6 3.2 12 0 q6 -3.2 12 0 q6 3.2 12 0 q6 -3.2 12 0 q6 3.2 12 0 q6 -3.2 12 0 q6 3.2 12 0 q6 -3.2 12 0 q6 3.2 12 0 q6 -3.2 12 0 q6 3.2 12 0 q6 -3.2 12 0 q6 3.2 12 0 q6 -3.2 12 0 q6 3.2 12 0 q6 -3.2 12 0 q6 3.2 12 0 q6 -3.2 12 0 q6 3.2 12 0 q6 -3.2 12 0 q6 3.2 12 0 q6 -3.2 12 0 q6 3.2 12 0 q6 -3.2 12 0 q6 3.2 12 0 q6 -3.2 12 0 q6 3.2 12 0 q6 -3.2 12 0 q6 3.2 12 0 q6 -3.2 12 0 q6 3.2 12 0 q6 -3.2 12 0 q6 3.2 12 0" fill="none" stroke="#e6bccb" stroke-width="0.45" opacity="0.65"/><path d="M-4 209.2 q6 3.2 12 0 q6 -3.2 12 0 q6 3.2 12 0 q6 -3.2 12 0 q6 3.2 12 0 q6 -3.2 12 0 q6 3.2 12 0 q6 -3.2 12 0 q6 3.2 12 0 q6 -3.2 12 0 q6 3.2 12 0 q6 -3.2 12 0 q6 3.2 12 0 q6 -3.2 12 0 q6 3.2 12 0 q6 -3.2 12 0 q6 3.2 12 0 q6 -3.2 12 0 q6 3.2 12 0 q6 -3.2 12 0 q6 3.2 12 0 q6 -3.2 12 0 q6 3.2 12 0 q6 -3.2 12 0 q6 3.2 12 0 q6 -3.2 12 0 q6 3.2 12 0 q6 -3.2 12 0 q6 3.2 12 0 q6 -3.2 12 0 q6 3.2 12 0 q6 -3.2 12 0 q6 3.2 12 0 q6 -3.2 12 0 q6 3.2 12 0 q6 -3.2 12 0 q6 3.2 12 0 q6 -3.2 12 0 q6 3.2 12 0 q6 -3.2 12 0" fill="none" stroke="#e6bccb" stroke-width="0.45" opacity="0.65"/><path d="M-4 214.6 q6 -3.2 12 0 q6 3.2 12 0 q6 -3.2 12 0 q6 3.2 12 0 q6 -3.2 12 0 q6 3.2 12 0 q6 -3.2 12 0 q6 3.2 12 0 q6 -3.2 12 0 q6 3.2 12 0 q6 -3.2 12 0 q6 3.2 12 0 q6 -3.2 12 0 q6 3.2 12 0 q6 -3.2 12 0 q6 3.2 12 0 q6 -3.2 12 0 q6 3.2 12 0 q6 -3.2 12 0 q6 3.2 12 0 q6 -3.2 12 0 q6 3.2 12 0 q6 -3.2 12 0 q6 3.2 12 0 q6 -3.2 12 0 q6 3.2 12 0 q6 -3.2 12 0 q6 3.2 12 0 q6 -3.2 12 0 q6 3.2 12 0 q6 -3.2 12 0 q6 3.2 12 0 q6 -3.2 12 0 q6 3.2 12 0 q6 -3.2 12 0 q6 3.2 12 0 q6 -3.2 12 0 q6 3.2 12 0 q6 -3.2 12 0 q6 3.2 12 0" fill="none" stroke="#e6bccb" stroke-width="0.45" opacity="0.65"/><rect x="140" y="24" width="66" height="166" fill="#faf4f7" opacity="0.75"/><rect x="210" y="24" width="135" height="166" fill="#faf2f6" opacity="0.55"/><path d="M210 212H442V237H215q-5 0-5-5z" fill="#fdfcfd"/><rect x="18" y="44" width="100" height="42" rx="12" fill="#fbf6f8" opacity="0.6"/></svg>
<div class="abs" style="left:-2px;top:-2px;width:127.2px;height:37.5px;border:1.2px solid #8e8088;border-radius:0 0 9px 0;"></div>
<div class="t" style="left:10.7px;top:11.1px;font-size:11.4px;font-weight:bold;color:#505052;letter-spacing:0.83px;">13.</div>
<svg style="left:0;top:0" width="454" height="285.8"><path d="M140.0 11.4H439.0q3 0 3 3V234.4q0 3 -3 3H213.6q-4 0 -4 -4V188.1H140.0q-5 0 -5 -5V16.4q0 -5 5 -5z" fill="none" stroke="#5b5558" stroke-width="1.1"/><path d="M135.0 24.2H442.0" stroke="#6a6266" stroke-width="1"/><path d="M209.6 24.2V188.1M278.2 11.4V189.1M346.2 11.4V189.1" stroke="#e2a9bd" stroke-width="0.9" stroke-dasharray="2 1.2"/><path d="M209.6 189.1H346.2" stroke="#e2a9bd" stroke-width="0.9"/></svg>
<div class="t" style="left:167.4px;top:13.1px;font-size:11.2px;font-weight:bold;color:#505052;letter-spacing:1.16px;">9.</div>
<div class="t" style="left:235.4px;top:13.1px;font-size:11.2px;font-weight:bold;color:#505052;letter-spacing:0.72px;">10.</div>
<div class="t" style="left:303.6px;top:13.1px;font-size:11.2px;font-weight:bold;color:#505052;letter-spacing:0.52px;">11.</div>
<div class="t" style="left:386.1px;top:13.1px;font-size:11.2px;font-weight:bold;color:#505052;letter-spacing:0.72px;">12.</div>
<div class="t" style="left:141.4px;top:26.8px;font-size:11.7px;font-weight:bold;color:#505052;">A1</div>
<div class="t" style="left:215.0px;top:26.5px;font-size:10.6px;color:#6a6467;letter-spacing:-0.04px;">---</div>
<div class="t" style="left:284.3px;top:26.5px;font-size:10.6px;color:#6a6467;letter-spacing:-0.04px;">---</div>
<svg style="left:165.6px;top:28.0px" width="46" height="12"><g transform="translate(0,0.600) scale(0.960)" opacity="0.820"><circle cx="3.4" cy="7.4" r="2.7" fill="#515153"/><circle cx="13.8" cy="7.4" r="2.7" fill="#515153"/><path d="M2 3.6l3.6-1.8h4.2l2.2-1.6 2.4 3.2-3.2 3.6H6.4z" fill="#515153"/></g></svg>
<div class="t" style="left:141.4px;top:42.4px;font-size:11.7px;font-weight:bold;color:#505052;">A</div>
<div class="t" style="left:215.0px;top:42.1px;font-size:10.6px;color:#6a6467;letter-spacing:-0.04px;">---</div>
<div class="t" style="left:284.3px;top:42.1px;font-size:10.6px;color:#6a6467;letter-spacing:-0.04px;">---</div>
<svg style="left:165.6px;top:43.6px" width="46" height="12"><g transform="translate(0,0.300) scale(0.980)" opacity="0.900"><circle cx="3.4" cy="7.4" r="2.7" fill="#515153"/><circle cx="13.8" cy="7.4" r="2.7" fill="#515153"/><path d="M2 3.6l3.6-1.8h4.2l2.2-1.6 2.4 3.2-3.2 3.6H6.4z" fill="#515153"/></g></svg>
<div class="t" style="left:215.0px;top:57.5px;font-size:10.6px;color:#6a6467;letter-spacing:-0.04px;">---</div>
<div class="t" style="left:284.3px;top:57.5px;font-size:10.6px;color:#6a6467;letter-spacing:-0.04px;">---</div>
<svg style="left:165.6px;top:59.0px" width="46" height="12"><circle cx="3.4" cy="7.4" r="2.7" fill="#515153"/><circle cx="13.8" cy="7.4" r="2.7" fill="#515153"/><path d="M2 3.6l3.6-1.8h4.2l2.2-1.6 2.4 3.2-3.2 3.6H6.4z" fill="#515153"/></svg>
<div class="t" style="left:141.4px;top:74.3px;font-size:11.7px;font-weight:bold;color:#505052;">B</div>
<div class="t" style="left:215.0px;top:74.0px;font-size:10.6px;color:#262425;letter-spacing:0.36px;">2026-06-18</div>
<div class="t" style="left:284.3px;top:74.0px;font-size:10.6px;color:#262425;letter-spacing:0.31px;">2045-04-02</div>
<svg style="left:165.6px;top:75.5px" width="46" height="12"><g transform="translate(0,0.6) scale(1.08)"><path d="M0.4 7.4V5.2l2.6-1.2 2-2.8h5.8l2.6 2.8 3.2 0.8 0.6 2.6z" fill="#515153"/><circle cx="4.2" cy="7.6" r="1.9" fill="#515153" stroke="#f5e6ec" stroke-width="0.6"/><circle cx="13" cy="7.6" r="1.9" fill="#515153" stroke="#f5e6ec" stroke-width="0.6"/></g></svg>
<div class="t" style="left:141.4px;top:90.0px;font-size:11.7px;font-weight:bold;color:#505052;">C</div>
<div class="t" style="left:215.0px;top:89.7px;font-size:10.6px;color:#6a6467;letter-spacing:-0.04px;">---</div>
<div class="t" style="left:284.3px;top:89.7px;font-size:10.6px;color:#6a6467;letter-spacing:-0.04px;">---</div>
<svg style="left:165.6px;top:91.2px" width="46" height="12"><g transform="translate(0,-0.600) scale(1.140,1.060)"><rect x="0" y="0.6" width="15" height="6.8" fill="#515153"/><path d="M15.6 2.6h3.2l2.4 2.6v2.2h-5.6z" fill="#515153"/><circle cx="4" cy="8.2" r="1.7" fill="#515153"/><circle cx="8.4" cy="8.2" r="1.7" fill="#515153"/><circle cx="18" cy="8.2" r="1.7" fill="#515153"/></g></svg>
<div class="t" style="left:141.4px;top:105.7px;font-size:11.7px;font-weight:bold;color:#505052;">D</div>
<div class="t" style="left:215.0px;top:105.4px;font-size:10.6px;color:#6a6467;letter-spacing:-0.04px;">---</div>
<div class="t" style="left:284.3px;top:105.4px;font-size:10.6px;color:#6a6467;letter-spacing:-0.04px;">---</div>
<svg style="left:165.6px;top:106.9px" width="46" height="12"><g transform="translate(0,-0.6) scale(1.07)"><rect x="0" y="0.8" width="26" height="7" rx="1.2" fill="#515153"/><path d="M1.4 3.4h23" stroke="#f5e6ec" stroke-width="1.2" stroke-dasharray="2.4 0.9"/><circle cx="5" cy="8.4" r="1.7" fill="#515153"/><circle cx="21" cy="8.4" r="1.7" fill="#515153"/></g></svg>
<div class="t" style="left:141.4px;top:121.4px;font-size:11.7px;font-weight:bold;color:#505052;">BE</div>
<div class="t" style="left:215.0px;top:121.1px;font-size:10.6px;color:#6a6467;letter-spacing:-0.04px;">---</div>
<div class="t" style="left:284.3px;top:121.1px;font-size:10.6px;color:#6a6467;letter-spacing:-0.04px;">---</div>
<svg style="left:165.6px;top:122.6px" width="46" height="12"><rect x="0" y="1.6" width="9.6" height="5.6" fill="#515153"/><circle cx="3" cy="8.2" r="1.5" fill="#515153"/><circle cx="6.6" cy="8.2" r="1.5" fill="#515153"/><path d="M9.6 6.4h2.4" stroke="#515153" stroke-width="0.9"/><g transform="translate(12.4,0.6) scale(1.02)"><path d="M0.4 7.4V5.2l2.6-1.2 2-2.8h5.8l2.6 2.8 3.2 0.8 0.6 2.6z" fill="#515153"/><circle cx="4.2" cy="7.6" r="1.9" fill="#515153" stroke="#f5e6ec" stroke-width="0.6"/><circle cx="13" cy="7.6" r="1.9" fill="#515153" stroke="#f5e6ec" stroke-width="0.6"/></g></svg>
<div class="t" style="left:141.4px;top:137.1px;font-size:11.7px;font-weight:bold;color:#505052;">CE</div>
<div class="t" style="left:215.0px;top:136.8px;font-size:10.6px;color:#6a6467;letter-spacing:-0.04px;">---</div>
<div class="t" style="left:284.3px;top:136.8px;font-size:10.6px;color:#6a6467;letter-spacing:-0.04px;">---</div>
<svg style="left:165.6px;top:138.3px" width="46" height="12"><g transform="translate(0,-0.600) scale(1.280,1.060)"><rect x="0" y="0.6" width="21" height="6.8" fill="#515153"/><path d="M21.6 2.6h3.2l2.4 2.6v2.2h-5.6z" fill="#515153"/><circle cx="3.6" cy="8.2" r="1.7" fill="#515153"/><circle cx="7.6" cy="8.2" r="1.7" fill="#515153"/><circle cx="17" cy="8.2" r="1.7" fill="#515153"/><circle cx="24" cy="8.2" r="1.7" fill="#515153"/></g></svg>
<div class="t" style="left:141.4px;top:153.0px;font-size:11.7px;font-weight:bold;color:#505052;">DE</div>
<div class="t" style="left:215.0px;top:152.7px;font-size:10.6px;color:#6a6467;letter-spacing:-0.04px;">---</div>
<div class="t" style="left:284.3px;top:152.7px;font-size:10.6px;color:#6a6467;letter-spacing:-0.04px;">---</div>
<svg style="left:165.6px;top:154.2px" width="46" height="12"><rect x="0" y="1.6" width="9.6" height="5.6" fill="#515153"/><circle cx="3" cy="8.2" r="1.5" fill="#515153"/><circle cx="6.6" cy="8.2" r="1.5" fill="#515153"/><path d="M9.6 6.4h2.4" stroke="#515153" stroke-width="0.9"/><g transform="translate(14,-0.400) scale(1.100,1)"><rect x="0" y="0.8" width="26" height="7" rx="1.2" fill="#515153"/><path d="M1.4 3.4h23" stroke="#f5e6ec" stroke-width="1.2" stroke-dasharray="2.4 0.9"/><circle cx="5" cy="8.4" r="1.7" fill="#515153"/><circle cx="21" cy="8.4" r="1.7" fill="#515153"/></g></svg>
<div class="t" style="left:141.4px;top:169.2px;font-size:11.7px;font-weight:bold;font-style:italic;color:#505052;">AM</div>
<div class="t" style="left:215.0px;top:168.9px;font-size:10.6px;color:#262425;letter-spacing:0.36px;">2026-08-02</div>
<div class="t" style="left:284.3px;top:168.9px;font-size:10.6px;color:#262425;letter-spacing:0.31px;">2045-04-02</div>
<svg style="left:165.6px;top:170.4px" width="46" height="12"><g transform="translate(0,0.4)"><circle cx="3.4" cy="7.6" r="2.5" fill="none" stroke="#515153" stroke-width="1.1"/><circle cx="13.6" cy="7.6" r="2.5" fill="none" stroke="#515153" stroke-width="1.1"/><path d="M3.4 7.6L6.4 3.4h5.2l2 4.2M6 3.4L8.6 7.6M10.4 1.4l1.6 2" fill="none" stroke="#515153" stroke-width="1.1"/></g></svg>
<svg style="left:31.8px;top:41.8px" width="36.4" height="42.2" viewBox="0 0 36 42"><path d="M0 42V33c3-4 8-5 13-7l2-2h6l2 2c5 2 10 3 13 7v9z" fill="#4a4b4e"/><path d="M14 25l4-1 4 1-2 9-2 8-2-8z" fill="#e4e4e6"/><path d="M17 27h2l1 15h-4z" fill="#333"/><path d="M10 12c0-8 3-11 8-11s8 3 8 11c0 7-3 14-8 14s-8-7-8-14z" fill="#8e8e90"/><path d="M9 13C7 4 12 0 18 0s11 4 9 13c-1-4-2-6-5-7-4 1-7 1-9 0-2 1-3 3-4 7z" fill="#2f3033"/><path d="M11 17c1 6 3 9 7 9s6-3 7-9c-1 3-3 4-7 4s-6-1-7-4z" fill="#4d4e50"/></svg>
<div class="t" style="left:68.8px;top:59.2px;font-size:17px;font-weight:bold;color:#8d8a8c;letter-spacing:-0.27px;">1985</div>
<div class="t" style="left:16.0px;top:167.5px;font-size:8.1px;font-weight:bold;color:#4b484a;">1.</div>
<div class="t" style="left:25.2px;top:167.5px;font-size:8.1px;font-weight:bold;color:#4b484a;letter-spacing:0.12px;">Efternamn</div>
<div class="t" style="left:16.0px;top:176.6px;font-size:8.1px;font-weight:bold;color:#4b484a;">2.</div>
<div class="t" style="left:25.2px;top:176.6px;font-size:8.1px;font-weight:bold;color:#4b484a;letter-spacing:0.14px;">Förnamn</div>
<div class="t" style="left:16.0px;top:185.6px;font-size:8.1px;font-weight:bold;color:#4b484a;">3.</div>
<div class="t" style="left:25.2px;top:185.6px;font-size:8.1px;font-weight:bold;color:#4b484a;letter-spacing:0.12px;">Födelsedatum /-land</div>
<div class="t" style="left:11.5px;top:194.6px;font-size:8.1px;font-weight:bold;color:#4b484a;">4a.</div>
<div class="t" style="left:25.2px;top:194.6px;font-size:8.1px;font-weight:bold;color:#4b484a;letter-spacing:0.14px;">Datum för utfärdande</div>
<div class="t" style="left:11.1px;top:203.7px;font-size:8.1px;font-weight:bold;color:#4b484a;">4b.</div>
<div class="t" style="left:25.2px;top:203.7px;font-size:8.1px;font-weight:bold;color:#4b484a;letter-spacing:0.16px;">Upphör att gälla</div>
<div class="t" style="left:11.5px;top:212.7px;font-size:8.1px;font-weight:bold;color:#4b484a;">4c.</div>
<div class="t" style="left:25.2px;top:212.7px;font-size:8.1px;font-weight:bold;color:#4b484a;letter-spacing:0.16px;">Utfärdande myndighet</div>
<div class="t" style="left:11.1px;top:221.7px;font-size:8.1px;font-weight:bold;color:#4b484a;">4d.</div>
<div class="t" style="left:25.2px;top:221.7px;font-size:8.1px;font-weight:bold;color:#4b484a;letter-spacing:0.18px;">Referensnummer</div>
<div class="t" style="left:16.0px;top:230.8px;font-size:8.1px;font-weight:bold;color:#4b484a;">5.</div>
<div class="t" style="left:25.2px;top:230.8px;font-size:8.1px;font-weight:bold;color:#4b484a;letter-spacing:0.14px;">Körkortsnummer</div>
<div class="t" style="left:16.0px;top:239.8px;font-size:8.1px;font-weight:bold;color:#4b484a;">9.</div>
<div class="t" style="left:25.2px;top:239.8px;font-size:8.1px;font-weight:bold;color:#4b484a;letter-spacing:0.14px;">Förarbehörigheter</div>
<div class="t" style="left:11.5px;top:248.8px;font-size:8.1px;font-weight:bold;color:#4b484a;">10.</div>
<div class="t" style="left:25.2px;top:248.8px;font-size:8.1px;font-weight:bold;color:#4b484a;letter-spacing:0.13px;">Datum för första utfärdande</div>
<div class="t" style="left:12.0px;top:257.8px;font-size:8.1px;font-weight:bold;color:#4b484a;">11.</div>
<div class="t" style="left:25.2px;top:257.8px;font-size:8.1px;font-weight:bold;color:#4b484a;letter-spacing:0.11px;">Förarbehörighet upphör att gälla</div>
<div class="t" style="left:11.5px;top:266.9px;font-size:8.1px;font-weight:bold;color:#4b484a;">12.</div>
<div class="t" style="left:25.2px;top:266.9px;font-size:8.1px;font-weight:bold;color:#4b484a;letter-spacing:0.06px;">Villkor</div>
<div class="abs" style="left:138.6px;top:199.2px;width:52.4px;height:32.8px;border-radius:9px;background:radial-gradient(ellipse at center,#e6dfe2 0%,#ddd5d9 55%,#c6bec3 100%);box-shadow:0 0 3px 1px rgba(120,105,112,.55), inset 0 0 3px rgba(90,80,85,.5);"></div>
<div class="t" style="left:143.0px;top:209.8px;font-size:12.8px;font-weight:bold;color:#2d2a2b;letter-spacing:-0.04px;transform:scaleX(-1);">123456</div>
<div class="t" style="left:178.2px;top:235.5px;font-size:42.5px;font-weight:bold;color:#70903c;-webkit-text-stroke:1.300px #70903c;">S</div>
<svg style="left:225.6px;top:242.6px" width="185" height="28"><rect x="0.0" y="0" width="1.3" height="27.8" fill="#111"/><rect x="2.2" y="0" width="1.8" height="27.8" fill="#111"/><rect x="4.8" y="0" width="0.9" height="27.8" fill="#111"/><rect x="6.5" y="0" width="1.3" height="27.8" fill="#111"/><rect x="8.6" y="0" width="2.4" height="27.8" fill="#111"/><rect x="11.9" y="0" width="0.9" height="27.8" fill="#111"/><rect x="13.6" y="0" width="1.8" height="27.8" fill="#111"/><rect x="17.1" y="0" width="0.9" height="27.8" fill="#111"/><rect x="18.9" y="0" width="0.9" height="27.8" fill="#111"/><rect x="21.5" y="0" width="0.9" height="27.8" fill="#111"/><rect x="23.2" y="0" width="0.9" height="27.8" fill="#111"/><rect x="24.9" y="0" width="2.4" height="27.8" fill="#111"/><rect x="29.0" y="0" width="0.9" height="27.8" fill="#111"/><rect x="30.8" y="0" width="0.9" height="27.8" fill="#111"/><rect x="32.6" y="0" width="1.3" height="27.8" fill="#111"/><rect x="35.6" y="0" width="0.9" height="27.8" fill="#111"/><rect x="37.3" y="0" width="2.4" height="27.8" fill="#111"/><rect x="40.9" y="0" width="2.4" height="27.8" fill="#111"/><rect x="44.2" y="0" width="0.9" height="27.8" fill="#111"/><rect x="46.0" y="0" width="1.3" height="27.8" fill="#111"/><rect x="48.1" y="0" width="2.4" height="27.8" fill="#111"/><rect x="51.3" y="0" width="2.4" height="27.8" fill="#111"/><rect x="54.5" y="0" width="2.4" height="27.8" fill="#111"/><rect x="57.8" y="0" width="1.8" height="27.8" fill="#111"/><rect x="61.3" y="0" width="1.3" height="27.8" fill="#111"/><rect x="64.3" y="0" width="2.4" height="27.8" fill="#111"/><rect x="68.4" y="0" width="1.3" height="27.8" fill="#111"/><rect x="70.9" y="0" width="0.9" height="27.8" fill="#111"/><rect x="72.7" y="0" width="0.9" height="27.8" fill="#111"/><rect x="74.4" y="0" width="2.4" height="27.8" fill="#111"/><rect x="78.0" y="0" width="2.4" height="27.8" fill="#111"/><rect x="82.1" y="0" width="1.3" height="27.8" fill="#111"/><rect x="85.1" y="0" width="1.3" height="27.8" fill="#111"/><rect x="87.2" y="0" width="0.9" height="27.8" fill="#111"/><rect x="89.8" y="0" width="0.9" height="27.8" fill="#111"/><rect x="91.9" y="0" width="0.9" height="27.8" fill="#111"/><rect x="94.5" y="0" width="1.8" height="27.8" fill="#111"/><rect x="97.1" y="0" width="0.9" height="27.8" fill="#111"/><rect x="99.2" y="0" width="1.3" height="27.8" fill="#111"/><rect x="101.7" y="0" width="2.4" height="27.8" fill="#111"/><rect x="105.8" y="0" width="2.4" height="27.8" fill="#111"/><rect x="109.9" y="0" width="0.9" height="27.8" fill="#111"/><rect x="111.6" y="0" width="1.3" height="27.8" fill="#111"/><rect x="114.6" y="0" width="0.9" height="27.8" fill="#111"/><rect x="116.3" y="0" width="1.3" height="27.8" fill="#111"/><rect x="119.3" y="0" width="1.3" height="27.8" fill="#111"/><rect x="122.3" y="0" width="1.3" height="27.8" fill="#111"/><rect x="124.4" y="0" width="1.8" height="27.8" fill="#111"/><rect x="127.4" y="0" width="0.9" height="27.8" fill="#111"/><rect x="129.1" y="0" width="1.8" height="27.8" fill="#111"/><rect x="131.7" y="0" width="0.9" height="27.8" fill="#111"/><rect x="133.8" y="0" width="0.9" height="27.8" fill="#111"/><rect x="135.6" y="0" width="1.8" height="27.8" fill="#111"/><rect x="139.1" y="0" width="1.8" height="27.8" fill="#111"/><rect x="141.7" y="0" width="0.9" height="27.8" fill="#111"/><rect x="144.3" y="0" width="1.8" height="27.8" fill="#111"/><rect x="147.3" y="0" width="0.9" height="27.8" fill="#111"/><rect x="149.9" y="0" width="2.4" height="27.8" fill="#111"/><rect x="153.5" y="0" width="1.8" height="27.8" fill="#111"/><rect x="156.5" y="0" width="1.8" height="27.8" fill="#111"/><rect x="159.2" y="0" width="0.9" height="27.8" fill="#111"/><rect x="160.9" y="0" width="0.9" height="27.8" fill="#111"/><rect x="162.7" y="0" width="0.9" height="27.8" fill="#111"/><rect x="164.5" y="0" width="0.9" height="27.8" fill="#111"/><rect x="167.1" y="0" width="2.4" height="27.8" fill="#111"/><rect x="170.4" y="0" width="1.3" height="27.8" fill="#111"/><rect x="172.9" y="0" width="0.9" height="27.8" fill="#111"/><rect x="174.7" y="0" width="1.8" height="27.8" fill="#111"/><rect x="177.7" y="0" width="2.4" height="27.8" fill="#111"/><rect x="181.3" y="0" width="0.9" height="27.8" fill="#111"/><rect x="183.0" y="0" width="1.8" height="27.8" fill="#111"/></svg>
<div class="t" style="left:294.4px;top:273.2px;font-size:8.2px;color:#2a2829;letter-spacing:0.74px;">985426562</div>
</div>
</div>
<div id="tools" class="abs" style="left:1.5px;top:120.3px;width:88px;height:500.4px;background:#535353;border-radius:4px 4px 0 0;overflow:hidden">
<div class="abs" style="left:0px;top:0px;width:88px;height:16.6px;background:#484848;"></div>
<div class="abs" style="left:0px;top:16.6px;width:88px;height:1px;background:#404040;"></div>
<svg style="left:50.5px;top:6.3px" width="10" height="7"><path d="M3.6 0.4L0.8 3.4l2.8 3M8.4 0.4L5.6 3.4l2.8 3" fill="none" stroke="#dadada" stroke-width="1.1"/></svg>
<svg style="left:72.7px;top:5.9px" width="8" height="8"><path d="M0.6 0.6l6.8 6.8M7.4 0.6L0.6 7.4" stroke="#dadada" stroke-width="1.5" fill="none"/></svg>
<div class="abs" style="left:31.0px;top:20.7px;width:24px;height:5px;background:repeating-linear-gradient(90deg,#474747 0 1px,transparent 1px 2.2px)"></div>
<div class="abs" style="left:4.7px;top:39.5px;width:37.6px;height:28.6px;background:#383838;border-radius:2px;"></div>
<svg style="left:12.1px;top:42.7px" width="22" height="22"><path d="M11 1.6l3.2 3.6H7.8zM11 20.4l3.2-3.6H7.8zM1.6 11l3.6-3.2v6.4zM20.4 11l-3.6-3.2v6.4z" fill="#dadada"/><path d="M11 4.6v12.8M4.6 11h12.8" stroke="#dadada" stroke-width="1.7" fill="none"/></svg>
<svg style="left:35.3px;top:62.3px" width="4" height="4"><path d="M4 0V4H0z" fill="#c6c6c6"/></svg>
<svg style="left:53.5px;top:42.7px" width="22" height="22"><rect x="1.6" y="2.6" width="18.8" height="15.4" fill="none" stroke="#dadada" stroke-width="1.7" stroke-dasharray="4.6 2.5"/></svg>
<svg style="left:76.7px;top:62.3px" width="4" height="4"><path d="M4 0V4H0z" fill="#c6c6c6"/></svg>
<svg style="left:12.1px;top:74.7px" width="22" height="22"><path d="M0.600 4.600L8 15.900 19.200 12M0.600 4.600L9.400 7.200M8 15.900L1 19.200M8 15.900L6.200 21.600" fill="none" stroke="#dadada" stroke-width="1.300"/><circle cx="8" cy="15.700" r="1.700" fill="#535353" stroke="#dadada" stroke-width="1.200"/><path d="M9.400 1.600h5.200a4.700 4.700 0 0 1 0 9.400H9.400V7.800h5a1.500 1.500 0 0 0 0-3h-5z" fill="#dadada"/><path d="M11.400 1.400v3.600M11.400 7.600v3.600" stroke="#535353" stroke-width="1"/></svg>
<svg style="left:35.3px;top:94.3px" width="4" height="4"><path d="M4 0V4H0z" fill="#c6c6c6"/></svg>
<svg style="left:53.5px;top:74.7px" width="22" height="22"><rect x="2.400" y="1.600" width="16.400" height="16.400" fill="none" stroke="#dadada" stroke-width="1.700" stroke-dasharray="1.700 1.240"/><path d="M6.200 5h8.600v8.800H6.200z" fill="#dadada"/><path d="M12.200 10.600l9.400 7.200-4.400 .6-2 4.200z" fill="#dadada" stroke="#535353" stroke-width="0.900"/></svg>
<svg style="left:76.7px;top:94.3px" width="4" height="4"><path d="M4 0V4H0z" fill="#c6c6c6"/></svg>
<svg style="left:12.1px;top:107.3px" width="22" height="22"><path d="M3.6 2.8l13.4 2-1 13.2-12 1.4z" fill="none" stroke="#dadada" stroke-width="1.4"/><path d="M8 3.6l-0.4 15.4M12.6 4.2l-0.6 14.4M3.6 8.4l13 1M3.6 13.8l12.6 0" stroke="#dadada" stroke-width="1" opacity=".8"/><circle cx="3.6" cy="2.8" r="1.5" fill="#535353" stroke="#dadada"/><circle cx="17" cy="4.8" r="1.5" fill="#535353" stroke="#dadada"/><circle cx="16" cy="18" r="1.5" fill="#535353" stroke="#dadada"/><circle cx="3.6" cy="19.4" r="1.5" fill="#535353" stroke="#dadada"/></svg>
<svg style="left:35.3px;top:126.9px" width="4" height="4"><path d="M4 0V4H0z" fill="#c6c6c6"/></svg>
<svg style="left:53.5px;top:107.3px" width="22" height="22"><rect x="2" y="3" width="18" height="15.6" fill="none" stroke="#dadada" stroke-width="1.5"/><path d="M2 3l18 15.6M20 3L2 18.6" stroke="#dadada" stroke-width="1.4"/><circle cx="2" cy="3" r="1.5" fill="#dadada"/><circle cx="20" cy="3" r="1.5" fill="#dadada"/><circle cx="2" cy="18.6" r="1.5" fill="#dadada"/><circle cx="20" cy="18.6" r="1.5" fill="#dadada"/></svg>
<svg style="left:76.7px;top:126.9px" width="4" height="4"><path d="M4 0V4H0z" fill="#c6c6c6"/></svg>
<svg style="left:12.1px;top:140.1px" width="22" height="22"><path d="M12.2 7l3.2 3.2-9 9.2c-1.2 1.2-3.6 0.8-3.6-1.4 0-.8.2-1.2.8-1.8z" fill="none" stroke="#dadada" stroke-width="1.6"/><path d="M10.6 5.6l1.4-1.4 1.6 1.2 2.8-3c1.2-1.2 3.8 1.2 2.6 2.6l-2.8 3 1.2 1.4-1.6 1.6z" fill="#dadada"/></svg>
<svg style="left:35.3px;top:159.7px" width="4" height="4"><path d="M4 0V4H0z" fill="#c6c6c6"/></svg>
<svg style="left:53.5px;top:140.1px" width="22" height="22"><g transform="rotate(-40 12.5 11)"><rect x="3" y="6.4" width="19" height="9.2" rx="2.6" fill="#dadada"/><g fill="#535353"><circle cx="10.2" cy="8.8" r=".9"/><circle cx="12.6" cy="8.8" r=".9"/><circle cx="15" cy="8.8" r=".9"/><circle cx="10.2" cy="11" r=".9"/><circle cx="12.6" cy="11" r=".9"/><circle cx="15" cy="11" r=".9"/><circle cx="10.2" cy="13.2" r=".9"/><circle cx="12.6" cy="13.2" r=".9"/><circle cx="15" cy="13.2" r=".9"/></g></g><path d="M9.4 2.2A6.6 6.6 0 0 0 3 10.6" fill="none" stroke="#dadada" stroke-width="1.5" stroke-dasharray="1.3 1.5"/></svg>
<svg style="left:76.7px;top:159.7px" width="4" height="4"><path d="M4 0V4H0z" fill="#c6c6c6"/></svg>
<svg style="left:12.1px;top:172.7px" width="22" height="22"><path d="M19.4 1.4c.6.4.6 1 .2 1.8L12.6 13.4l-2.8-2z" fill="#dadada"/><path d="M9.2 12.2l2.8 2.2c-.6 3-3.4 5.6-9.2 5.8 2.400-2 2.600-6.600 6.400-8z" fill="#dadada"/></svg>
<svg style="left:35.3px;top:192.3px" width="4" height="4"><path d="M4 0V4H0z" fill="#c6c6c6"/></svg>
<svg style="left:53.5px;top:172.7px" width="22" height="22"><circle cx="11" cy="5.400" r="3.6" fill="#dadada"/><path d="M9.4 8h3.2l.8 5.200h-4.800z" fill="#dadada"/><rect x="3.4" y="12.600" width="15.2" height="3.800" rx="1" fill="#dadada"/><rect x="3.4" y="17.800" width="15.200" height="1.700" fill="#dadada"/></svg>
<svg style="left:76.7px;top:192.3px" width="4" height="4"><path d="M4 0V4H0z" fill="#c6c6c6"/></svg>
<svg style="left:12.1px;top:205.3px" width="22" height="22"><path d="M20 2.400c.6.400.6 1 .2 1.800L14 13.600l-2.600-1.800z" fill="#dadada"/><path d="M10.800 12.600l2.600 2c-.6 2.800-3 5-8 5.200 2-1.800 2.200-6 5.400-7.200z" fill="#dadada"/><path d="M2.600 6.400C5 3.400 8.400 3 11 5" fill="none" stroke="#dadada" stroke-width="1.300"/><path d="M0.800 7.800l4.800-.8-2.600-3.200z" fill="#dadada"/><path d="M14.600 17.600a5 5 0 0 0 2.400-6" fill="none" stroke="#dadada" stroke-width="1.300" stroke-dasharray="1.200 1.400"/></svg>
<svg style="left:35.3px;top:224.9px" width="4" height="4"><path d="M4 0V4H0z" fill="#c6c6c6"/></svg>
<svg style="left:53.5px;top:205.3px" width="22" height="22"><path d="M12.600 2.600l7 4.600-5 7.600-7-4.600z" fill="#dadada"/><path d="M7 11l6.800 4.600-1.800 2.600H6.400l-3.200-2.200z" fill="none" stroke="#dadada" stroke-width="1.400"/><path d="M11 18.400h9.400" stroke="#dadada" stroke-width="1.400"/></svg>
<svg style="left:76.7px;top:224.9px" width="4" height="4"><path d="M4 0V4H0z" fill="#c6c6c6"/></svg>
<svg style="left:12.1px;top:238.0px" width="22" height="22"><path d="M8.800 6.200l8.400 7.200-7.800 6.400-7-8.600z" fill="none" stroke="#dadada" stroke-width="1.500"/><path d="M5.400 8.800V3.600c0-2.600 4-2.600 4 0v8" fill="none" stroke="#dadada" stroke-width="1.300"/><circle cx="9.400" cy="11.600" r="1.300" fill="#dadada"/><path d="M18.800 14.600c1.400 2 1.800 2.800 1.800 3.600a1.800 1.800 0 0 1-3.600 0c0-.8.400-1.600 1.800-3.600z" fill="#dadada"/></svg>
<svg style="left:35.3px;top:257.6px" width="4" height="4"><path d="M4 0V4H0z" fill="#c6c6c6"/></svg>
<svg style="left:53.5px;top:238.0px" width="22" height="22"><path d="M11 1.400c4.200 6 6.400 9.200 6.400 12.600a6.400 6.400 0 0 1-12.800 0c0-3.400 2.200-6.600 6.400-12.600z" fill="#dadada"/></svg>
<svg style="left:76.7px;top:257.6px" width="4" height="4"><path d="M4 0V4H0z" fill="#c6c6c6"/></svg>
<svg style="left:12.1px;top:270.5px" width="22" height="22"><circle cx="13.800" cy="7.600" r="5.800" fill="#dadada"/><path d="M9.800 11.600L2.400 19" stroke="#dadada" stroke-width="2.2" stroke-linecap="round"/></svg>
<svg style="left:35.3px;top:290.1px" width="4" height="4"><path d="M4 0V4H0z" fill="#c6c6c6"/></svg>
<svg style="left:53.5px;top:270.5px" width="22" height="22"><path d="M13 2.200l6 3.800-1.600 3L11.400 5.200z" fill="#dadada"/><path d="M11 6.400l5.800 3.600c.6 4-2.400 7.800-13 9.400C4 12.600 6.800 8 11 6.400z" fill="none" stroke="#dadada" stroke-width="1.400"/><path d="M4.200 19l6.400-7" stroke="#dadada" stroke-width="1.100"/><circle cx="11" cy="11.600" r="1.400" fill="#dadada"/></svg>
<svg style="left:76.7px;top:290.1px" width="4" height="4"><path d="M4 0V4H0z" fill="#c6c6c6"/></svg>
<svg style="left:12.1px;top:302.7px" width="22" height="22"><path d="M3 3.400h16v4.200h-1.400l-.6-2.400h-4.600v13l2.600.6v1.400H7v-1.400l2.600-.6v-13H5l-.6 2.400H3z" fill="#dadada"/></svg>
<svg style="left:35.3px;top:322.3px" width="4" height="4"><path d="M4 0V4H0z" fill="#c6c6c6"/></svg>
<svg style="left:53.5px;top:302.7px" width="22" height="22"><path d="M5.600 1.400l11.800 11-5.200.4 2.800 5.800-2.600 1.200-2.800-5.800-4 3.600z" fill="#111" stroke="#dadada" stroke-width="1.300"/></svg>
<svg style="left:76.7px;top:322.3px" width="4" height="4"><path d="M4 0V4H0z" fill="#c6c6c6"/></svg>
<svg style="left:12.1px;top:335.1px" width="22" height="22"><rect x="1.600" y="3.200" width="18.800" height="14.600" fill="#757575" stroke="#dadada" stroke-width="1.500"/></svg>
<svg style="left:35.3px;top:354.7px" width="4" height="4"><path d="M4 0V4H0z" fill="#c6c6c6"/></svg>
<svg style="left:53.5px;top:335.1px" width="22" height="22"><path d="M6.400 11V5.200c0-1.500 2-1.500 2 0V3.600c0-1.500 2.100-1.500 2.100 0v.6c0-1.500 2.100-1.500 2.100 0v1.400c0-1.400 2-1.400 2 0v8.600c0 3.400-2 6-5.200 6-2.600 0-3.800-1.200-5-3.200L1.800 12.400c-.8-1.400 1-2.400 2-1.200l2.600 3z" fill="#dadada"/><path d="M8.400 5v5M10.500 4v6M12.600 5v5" stroke="#535353" stroke-width=".7"/></svg>
<svg style="left:76.7px;top:354.7px" width="4" height="4"><path d="M4 0V4H0z" fill="#c6c6c6"/></svg>
<svg style="left:12.1px;top:367.7px" width="22" height="22"><circle cx="8.600" cy="8.400" r="6.600" fill="none" stroke="#dadada" stroke-width="1.700"/><path d="M13.400 13.400l6.600 6.400" stroke="#dadada" stroke-width="2.400"/><path d="M5.400 7.400a3.600 3.600 0 0 1 3.200-2.600" fill="none" stroke="#dadada" stroke-width="1.100"/></svg>
<svg style="left:53.5px;top:367.7px" width="22" height="22"><circle cx="4" cy="11" r="2.100" fill="#dadada"/><circle cx="11" cy="11" r="2.100" fill="#dadada"/><circle cx="18" cy="11" r="2.100" fill="#dadada"/></svg>
<svg style="left:76.7px;top:387.3px" width="4" height="4"><path d="M4 0V4H0z" fill="#c6c6c6"/></svg>
<div class="abs" style="left:39.9px;top:425.3px;width:30.8px;height:30.6px;background:#ffffff;border:1px solid #2c2c2c;box-shadow:0 0 0 0.6px #d0d0d0;"></div>
<div class="abs" style="left:21.3px;top:405.7px;width:30.8px;height:30.4px;background:#000;border:1.6px solid #f4f4f4;box-shadow:0 0 0 1px #2c2c2c;"></div>
<svg style="left:61.5px;top:403.7px" width="13" height="14"><path d="M3.400 3H9.600V10" fill="none" stroke="#dadada" stroke-width="1.600"/><path d="M0.400 3l4-2.800v5.600zM9.600 13.600l-2.900-4h5.800z" fill="#dadada"/></svg>
<div class="abs" style="left:25.9px;top:451.1px;width:8px;height:8px;background:#d8d8d8;"></div>
<div class="abs" style="left:21.5px;top:446.7px;width:8.4px;height:8.4px;background:#000;border:1.3px solid #e0e0e0;"></div>
<svg style="left:12.5px;top:472.7px" width="21" height="17"><rect x=".7" y=".7" width="19.600" height="15.600" fill="none" stroke="#dadada" stroke-width="1.300"/><circle cx="10.500" cy="8.500" r="4.800" fill="none" stroke="#dadada" stroke-width="1.300" stroke-dasharray="1.300 1.300"/></svg>
<svg style="left:53.1px;top:472.7px" width="22" height="17"><rect x="8" y=".8" width="13" height="9.600" fill="#535353" stroke="#dadada" stroke-width="1.400"/><rect x=".8" y="5.600" width="13" height="10.400" fill="#535353" stroke="#dadada" stroke-width="1.400"/><rect x="8" y=".8" width="13" height="2" fill="#dadada"/></svg>
<svg style="left:76.7px;top:485.7px" width="4" height="4"><path d="M4 0V4H0z" fill="#c6c6c6"/></svg>
</div>
<div class="abs" style="left:0px;top:110px;width:1px;height:709px;background:#4a4a4a;"></div>
<div id="dock" class="abs" style="left:1394px;top:74px;width:206px;height:766px;">
<div class="abs" style="left:23px;top:0px;width:183px;height:766px;background:#4d4d4d;"></div>
<div class="abs" style="left:23px;top:0px;width:183px;height:14.6px;background:#424242;border-left:1px solid #3b3b3b;"></div>
<div class="abs" style="left:71.20000000000005px;top:14.599999999999994px;width:3.2px;height:751px;background:#3c3c3c;"></div>
<div class="abs" style="left:23px;top:0px;width:1px;height:766px;background:#3b3b3b;"></div>
<svg style="left:55.59999999999991px;top:3.5999999999999943px" width="10" height="7"><path d="M3.6 0.4L0.8 3.4l2.8 3M8.4 0.4L5.6 3.4l2.8 3" fill="none" stroke="#d6d6d6" stroke-width="1.1"/></svg>
<svg style="left:189px;top:3.5999999999999943px" width="10" height="7"><path d="M3.6 0.4L0.8 3.4l2.8 3M8.4 0.4L5.6 3.4l2.8 3" fill="none" stroke="#d6d6d6" stroke-width="1.1"/></svg>
<div class="abs" style="left:24.59999999999991px;top:15px;width:46.6px;height:10.4px;background:#4f4f4f;border-bottom:1px solid #3b3b3b;"></div>
<div class="abs" style="left:74px;top:15px;width:132px;height:10.4px;background:#4f4f4f;border-bottom:1px solid #3b3b3b;"></div>
<div class="abs" style="left:36px;top:18px;width:24px;height:5px;background:repeating-linear-gradient(90deg,#424242 0 1px,transparent 1px 2.2px)"></div>
<div class="abs" style="left:127px;top:18px;width:24px;height:5px;background:repeating-linear-gradient(90deg,#424242 0 1px,transparent 1px 2.2px)"></div>
<div class="abs" style="left:74px;top:26px;width:132px;height:74.4px;background:#535353;border-bottom:1px solid #3b3b3b;"></div>
<div class="abs" style="left:74px;top:102px;width:132px;height:119.4px;background:#535353;border-bottom:1px solid #3b3b3b;border-top:1px solid #5a5a5a;"></div>
<div class="abs" style="left:74px;top:223px;width:132px;height:505px;background:#505050;"></div>
<div class="abs" style="left:24.59999999999991px;top:26px;width:46.6px;height:702px;background:#535353;"></div>
<div class="t" style="left:125.0px;top:37.8px;font-size:12.8px;font-weight:bold;color:#eeeeee;letter-spacing:-1.32px;">Swatches</div>
<div class="t" style="left:125.3px;top:72.6px;font-size:12.8px;font-weight:bold;color:#eeeeee;letter-spacing:-1.04px;">Gradients</div>
<div class="t" style="left:124.4px;top:124.8px;font-size:12.8px;font-weight:bold;color:#eeeeee;letter-spacing:-1.46px;">Learn</div>
<svg style="left:173.4000000000001px;top:202px" width="11" height="3"><circle cx="1.2" cy="1.4" r="1" fill="#d6d6d6"/><circle cx="5.2" cy="1.4" r="1" fill="#d6d6d6"/><circle cx="9.2" cy="1.4" r="1" fill="#d6d6d6"/></svg>
<div class="abs" style="left:0px;top:728px;width:23px;height:38px;background:#515151;"></div>
<div class="abs" style="left:24.59999999999991px;top:728px;width:46.8px;height:36.4px;background:#505050;border-bottom:1px solid #3b3b3b;"></div>
<div class="abs" style="left:74px;top:728px;width:132px;height:36.4px;background:#505050;border-bottom:1px solid #3b3b3b;"></div>
</div>
<div id="charp" class="abs" style="left:1269.4px;top:100.6px;width:270.8px;height:112px;background:#535353;border-radius:4px 4px 0 0;overflow:hidden;box-shadow:0 0 0 0.6px #3a3a3a">
<div class="abs" style="left:0px;top:0px;width:271px;height:16px;background:#484848;"></div>
<div class="abs" style="left:0px;top:16px;width:271px;height:35px;background:#424242;"></div>
<div class="abs" style="left:0px;top:16px;width:79px;height:36px;background:#535353;border-right:1px solid #3a3a3a;"></div>
<div class="abs" style="left:79px;top:50.4px;width:192px;height:1px;background:#3a3a3a;"></div>
<svg style="left:233.6px;top:5.6px" width="10" height="7"><path d="M3.6 0.4L0.8 3.4l2.8 3M8.4 0.4L5.6 3.4l2.8 3" fill="none" stroke="#d6d6d6" stroke-width="1.1"/></svg>
<svg style="left:255.6px;top:5.0px" width="8" height="8"><path d="M0.6 0.6l6.8 6.8M7.4 0.6L0.6 7.4" stroke="#d6d6d6" stroke-width="1.5" fill="none"/></svg>
<div class="t" style="left:12.0px;top:25.5px;font-size:12.9px;font-weight:bold;color:#f2f2f2;letter-spacing:-0.47px;">Character</div>
<svg style="left:250.6px;top:29.8px" width="13" height="9"><path d="M0 0.7h13M0 3.3h13M0 5.9h13M0 8.500h13" stroke="#cfcfcf" stroke-width="1.200"/></svg>
<div class="abs" style="left:7.2px;top:69.4px;width:147.4px;height:19.2px;background:#464646;border:1px solid #626262;border-radius:3px;"></div>
<div class="abs" style="left:137.2px;top:70.4px;width:1px;height:17.2px;background:#5c5c5c;"></div>
<div class="t" style="left:11.6px;top:73.3px;font-size:12.6px;color:#e4e4e4;letter-spacing:-0.53px;">PWSignaturetwo</div>
<svg style="left:141.4px;top:77.4px" width="9" height="5"><path d="M0.7 0.8l3.6 3.4 3.6-3.4" fill="none" stroke="#c4c4c4" stroke-width="1.2"/></svg>
<div class="abs" style="left:171.6px;top:69.4px;width:90.4px;height:19.2px;background:#464646;border:1px solid #626262;border-radius:3px;"></div>
<div class="abs" style="left:243.8px;top:70.4px;width:1px;height:17.2px;background:#5c5c5c;"></div>
<div class="t" style="left:176.6px;top:73.3px;font-size:12.6px;color:#e4e4e4;letter-spacing:-0.46px;">Medium</div>
<svg style="left:248.4px;top:77.4px" width="9" height="5"><path d="M0.7 0.8l3.6 3.4 3.6-3.4" fill="none" stroke="#c4c4c4" stroke-width="1.2"/></svg>
<div class="abs" style="left:32.6px;top:99.8px;width:92.4px;height:19.6px;background:#464646;border:1px solid #626262;border-radius:3px;"></div>
<div class="abs" style="left:106.6px;top:100.8px;width:1px;height:17.6px;background:#5c5c5c;"></div>
<div class="t" style="left:36.6px;top:103.3px;font-size:12.6px;color:#e4e4e4;letter-spacing:0.08px;">26.5 pt</div>
<svg style="left:111.3px;top:108.0px" width="9" height="5"><path d="M0.7 0.8l3.6 3.4 3.6-3.4" fill="none" stroke="#c4c4c4" stroke-width="1.2"/></svg>
<div class="abs" style="left:175.2px;top:99.8px;width:86.8px;height:19.6px;background:#464646;border:1px solid #626262;border-radius:3px;"></div>
<div class="abs" style="left:243.8px;top:100.8px;width:1px;height:17.6px;background:#5c5c5c;"></div>
<div class="t" style="left:180.0px;top:103.3px;font-size:12.6px;color:#e4e4e4;letter-spacing:0.34px;">(Auto)</div>
<svg style="left:248.4px;top:108.0px" width="9" height="5"><path d="M0.7 0.8l3.6 3.4 3.6-3.4" fill="none" stroke="#c4c4c4" stroke-width="1.2"/></svg>
<div class="t" style="left:9.6px;top:98.7px;font-size:20px;font-family:'Liberation Serif',serif;color:#d8d8d8;transform:scaleX(1.3);transform-origin:left;">T</div>
<svg style="left:150.6px;top:97.4px" width="18" height="16"><path d="M8 9.600L11 2l3 7.600M9 7.200h4" fill="none" stroke="#cfcfcf" stroke-width="1.200"/><path d="M7 0.600h8M7 12h8" stroke="#cfcfcf" stroke-width="1"/><path d="M2.400 4v8M0.600 10l1.800 2.400L4.200 10" fill="none" stroke="#cfcfcf" stroke-width="1"/></svg>
</div>
<div id="layers" class="abs" style="left:1269.4px;top:210.3px;width:295.6px;height:591.7px;background:#535353;border-radius:4px 4px 0 0;overflow:hidden;box-shadow:0 0 0 0.700px #3a3a3a, 0 1px 5px rgba(0,0,0,.4)">
<div class="abs" style="left:0px;top:0px;width:295.6px;height:16.4px;background:#484848;"></div>
<div class="abs" style="left:0px;top:16.4px;width:295.6px;height:35.2px;background:#454545;"></div>
<div class="abs" style="left:0px;top:16.4px;width:60px;height:35.4px;background:#535353;border-right:1px solid #3a3a3a;"></div>
<div class="abs" style="left:60px;top:50.6px;width:235.60000000000002px;height:1px;background:#3a3a3a;"></div>
<div class="abs" style="left:134.2px;top:16.4px;width:1px;height:34.4px;background:#3a3a3a;"></div>
<div class="abs" style="left:189.2px;top:16.4px;width:1px;height:34.4px;background:#3a3a3a;"></div>
<svg style="left:258.0px;top:5.7px" width="10" height="7"><path d="M3.6 0.4L0.8 3.4l2.8 3M8.4 0.4L5.6 3.4l2.8 3" fill="none" stroke="#d6d6d6" stroke-width="1.1"/></svg>
<svg style="left:280.6px;top:5.1px" width="8" height="8"><path d="M0.6 0.6l6.8 6.8M7.4 0.6L0.6 7.4" stroke="#d6d6d6" stroke-width="1.5" fill="none"/></svg>
<div class="t" style="left:12.0px;top:26.2px;font-size:12.9px;font-weight:bold;color:#f2f2f2;letter-spacing:-0.92px;">Layers</div>
<div class="t" style="left:71.2px;top:26.2px;font-size:12.9px;font-weight:bold;color:#b2b2b2;letter-spacing:-0.72px;">Channels</div>
<div class="t" style="left:146.0px;top:26.2px;font-size:12.9px;font-weight:bold;color:#b2b2b2;letter-spacing:-0.78px;">Paths</div>
<svg style="left:275.2px;top:29.9px" width="13" height="9"><path d="M0 0.7h13M0 3.3h13M0 5.9h13M0 8.500h13" stroke="#cfcfcf" stroke-width="1.200"/></svg>
<div class="abs" style="left:5.6px;top:63.7px;width:107px;height:22.2px;background:#464646;border:1px solid #626262;border-radius:3px;"></div>
<svg style="left:15.2px;top:68.7px" width="13" height="13"><circle cx="5" cy="5" r="3.900" fill="none" stroke="#e0e0e0" stroke-width="1.600"/><path d="M7.800 7.800l4.200 4.200" stroke="#e0e0e0" stroke-width="2"/></svg>
<div class="t" style="left:32.6px;top:68.9px;font-size:12.8px;color:#e6e6e6;letter-spacing:-0.71px;">Kind</div>
<svg style="left:99.6px;top:73.3px" width="9" height="5"><path d="M0.7 0.8l3.6 3.4 3.6-3.4" fill="none" stroke="#c4c4c4" stroke-width="1.2"/></svg>
<svg style="left:128.4px;top:67.7px" width="17" height="14"><rect x=".8" y=".8" width="15.400" height="12" fill="none" stroke="#dcdcdc" stroke-width="1.500"/><path d="M3 10.600l3.400-4.600 2.400 3 1.800-1.800 3 3.400z" fill="#dcdcdc"/></svg>
<svg style="left:158.6px;top:67.1px" width="15" height="15"><circle cx="7.500" cy="7.500" r="6.500" fill="none" stroke="#dcdcdc" stroke-width="1.500"/><path d="M12.100 2.900A6.500 6.500 0 0 0 2.900 12.100z" fill="#dcdcdc"/></svg>
<div class="t" style="left:189.0px;top:66.7px;font-size:17.5px;font-weight:bold;font-family:'Liberation Serif',serif;color:#dcdcdc;">T</div>
<svg style="left:218.6px;top:67.1px" width="15" height="15"><rect x="2.400" y="2.400" width="10.200" height="10.200" fill="none" stroke="#dcdcdc" stroke-width="1.400"/><g fill="#535353" stroke="#dcdcdc" stroke-width="1.100"><rect x=".6" y=".6" width="3.400" height="3.400"/><rect x="11" y=".6" width="3.400" height="3.400"/><rect x=".6" y="11" width="3.400" height="3.400"/><rect x="11" y="11" width="3.400" height="3.400"/></g></svg>
<svg style="left:250.6px;top:66.7px" width="14" height="16"><path d="M4 .8h5.600l3.600 3.600v10.800H4z" fill="#dcdcdc"/><path d="M9.200 .8v4h4" fill="none" stroke="#535353" stroke-width="1"/><rect x=".6" y="7.400" width="7" height="7.800" fill="#dcdcdc" stroke="#535353" stroke-width="1"/></svg>
<div class="abs" style="left:278.6px;top:63.7px;width:11.4px;height:22.4px;background:#484848;border-radius:6px;box-shadow:inset 0 0 0 1px #404040;"></div>
<div class="abs" style="left:278.8px;top:63.1px;width:11.2px;height:11.2px;background:#e2e2e2;border-radius:50%;"></div>
<div class="abs" style="left:0px;top:90.7px;width:295.6px;height:1px;background:#484848;"></div>
<div class="abs" style="left:5.6px;top:99.3px;width:159.4px;height:20.6px;background:#4f4f4f;border:1px solid #5c5c5c;border-radius:3px;"></div>
<div class="t" style="left:15.6px;top:103.9px;font-size:12.8px;color:#858585;letter-spacing:-0.25px;">Normal</div>
<svg style="left:151.6px;top:108.3px" width="9" height="5"><path d="M0.7 0.8l3.6 3.4 3.6-3.4" fill="none" stroke="#666" stroke-width="1.2"/></svg>
<div class="t" style="left:174.6px;top:103.9px;font-size:12.8px;color:#858585;letter-spacing:-0.14px;">Opacity:</div>
<div class="abs" style="left:227.0px;top:99.3px;width:44px;height:20.6px;background:#4c4c4c;border:1px solid #5f5f5f;border-radius:3px 0 0 3px;"></div>
<div class="abs" style="left:272.6px;top:99.3px;width:16px;height:20.6px;background:#4f4f4f;border:1px solid #5c5c5c;border-radius:0 3px 3px 0;"></div>
<div class="t" style="left:231.6px;top:103.9px;font-size:12.8px;color:#858585;letter-spacing:-0.45px;">100%</div>
<svg style="left:276.2px;top:108.3px" width="9" height="5"><path d="M0.7 0.8l3.6 3.4 3.6-3.4" fill="none" stroke="#666" stroke-width="1.2"/></svg>
<div class="abs" style="left:0px;top:126.7px;width:295.6px;height:1px;background:#484848;"></div>
<div class="t" style="left:8.2px;top:138.3px;font-size:12.8px;color:#858585;letter-spacing:-0.15px;">Lock:</div>
<svg style="left:49.6px;top:137.5px" width="14" height="14"><rect x=".5" y=".5" width="13" height="13" fill="none" stroke="#aaaaaa"/><path d="M1 1h4v4H1zM9 1h4v4H9zM5 5h4v4H5zM1 9h4v4H1zM9 9h4v4H9z" fill="#aaaaaa"/></svg>
<svg style="left:77.0px;top:136.7px" width="17" height="16"><path d="M15.400 .6c.6.400.6 1 .2 1.600L9.600 10.400 7.400 8.800z" fill="#aaaaaa"/><path d="M6.800 9.600l2.200 1.800c-.6 2.400-2.800 4-7.600 4 1.800-1.400 2.200-4.800 5.400-5.800z" fill="#aaaaaa"/></svg>
<svg style="left:102.8px;top:136.9px" width="16" height="16"><path d="M8 .4l2.800 3.200H5.200zM8 15.600l2.800-3.200H5.200zM.4 8l3.200-2.800v5.600zM15.600 8l-3.200-2.800v5.600z" fill="#aaaaaa"/><path d="M8 3v10M3 8h10" stroke="#aaaaaa" stroke-width="1.500"/></svg>
<svg style="left:130.2px;top:136.3px" width="18" height="17"><path d="M3.400 0v13.400H18M0 3.400h14.400V17" fill="none" stroke="#aaaaaa" stroke-width="1.300"/><path d="M14.400 .6l2 2M16.400 .6l-2 2" stroke="#aaaaaa" stroke-width=".9"/></svg>
<svg style="left:159.6px;top:136.1px" width="14" height="16"><rect x=".6" y="6.600" width="12.800" height="9" rx="1.200" fill="#aaaaaa"/><path d="M3.400 7V4.400a3.600 3.600 0 0 1 7.200 0V7" fill="none" stroke="#aaaaaa" stroke-width="1.700"/><circle cx="7" cy="11" r="1.300" fill="#535353"/></svg>
<div class="t" style="left:203.6px;top:138.3px;font-size:12.8px;color:#858585;letter-spacing:-0.60px;">Fill:</div>
<div class="abs" style="left:227.0px;top:133.7px;width:44px;height:20.6px;background:#4c4c4c;border:1px solid #5f5f5f;border-radius:3px 0 0 3px;"></div>
<div class="abs" style="left:272.6px;top:133.7px;width:16px;height:20.6px;background:#4f4f4f;border:1px solid #5c5c5c;border-radius:0 3px 3px 0;"></div>
<div class="t" style="left:231.6px;top:138.3px;font-size:12.8px;color:#858585;letter-spacing:-0.45px;">100%</div>
<svg style="left:276.2px;top:142.7px" width="9" height="5"><path d="M0.7 0.8l3.6 3.4 3.6-3.4" fill="none" stroke="#666" stroke-width="1.2"/></svg>
<div class="abs" style="left:0px;top:161.7px;width:295.6px;height:1px;background:#454545;"></div>
<div class="abs" style="left:37.2px;top:161.7px;width:1px;height:389.4px;background:#484848;"></div>
<div class="abs" style="left:275.0px;top:161.7px;width:20.6px;height:389.4px;background:#4a4a4a;"></div>
<div class="abs" style="left:278.2px;top:497.7px;width:14px;height:32.4px;background:#6b6b6b;border-radius:3px;"></div>
<svg style="left:281.6px;top:175.1px" width="9" height="5"><path d="M0.7 4.200l3.600-3.400 3.600 3.400" fill="none" stroke="#8a8a8a" stroke-width="1.200"/></svg>
<svg style="left:281.6px;top:535.7px" width="9" height="5"><path d="M0.7 0.8l3.6 3.4 3.6-3.4" fill="none" stroke="#8a8a8a" stroke-width="1.2"/></svg>
<div class="abs" style="left:262.0px;top:161.7px;width:13px;height:29px;background:#474747;"></div>
<div class="abs" style="left:262.0px;top:238.1px;width:13px;height:49.6px;background:#474747;"></div>
<div class="abs" style="left:262.0px;top:402.7px;width:13px;height:52px;background:#474747;"></div>
<svg style="left:265.0px;top:162.4px" width="9" height="5"><path d="M0.7 4.200l3.600-3.400 3.600 3.400" fill="none" stroke="#c8c8c8" stroke-width="1.200"/></svg>
<svg style="left:265.0px;top:260.4px" width="9" height="5"><path d="M0.7 4.200l3.600-3.400 3.600 3.400" fill="none" stroke="#c8c8c8" stroke-width="1.200"/></svg>
<svg style="left:265.0px;top:427.2px" width="9" height="5"><path d="M0.7 4.200l3.600-3.400 3.600 3.400" fill="none" stroke="#c8c8c8" stroke-width="1.200"/></svg>
<div class="abs" style="left:0px;top:237.6px;width:275.0px;height:1px;background:#474747;"></div>
<div class="abs" style="left:0px;top:402.3px;width:275.0px;height:1px;background:#474747;"></div>
<div class="abs" style="left:0px;top:501.5px;width:275.0px;height:1px;background:#474747;"></div>
<div class="abs" style="left:0;top:162.7px;width:275.0px;height:30px;overflow:hidden">
<svg style="left:11.7px;top:-3.0px" width="17" height="11.200"><path d="M0.300 5.600C3 1.400 6 0.300 8.500 0.300S14 1.400 16.700 5.600C14 9.800 11 10.900 8.500 10.900S3 9.800 0.300 5.600z" fill="#e2e2e2"/><circle cx="8.500" cy="5.400" r="3.300" fill="#535353"/><circle cx="8.500" cy="5.400" r="1.500" fill="#e2e2e2"/></svg>
<div class="t" style="left:114.2px;top:-8.6px;font-size:24px;font-family:'Liberation Serif',serif;color:#e6e6e6;transform:scaleX(1.100);transform-origin:left;">T</div>
<div class="t" style="left:155.2px;top:-6.2px;font-size:12.8px;color:#e6e6e6;letter-spacing:-0.35px;">Number 01</div>
<div class="t" style="left:243.6px;top:-8.0px;font-size:17px;font-style:italic;font-family:'Liberation Serif',serif;color:#e6e6e6;">fx</div>
</div>
<svg style="left:122.5px;top:197.5px" width="17" height="11.200"><path d="M0.300 5.600C3 1.400 6 0.300 8.500 0.300S14 1.400 16.700 5.600C14 9.800 11 10.900 8.500 10.900S3 9.800 0.300 5.600z" fill="#e2e2e2"/><circle cx="8.500" cy="5.400" r="3.300" fill="#535353"/><circle cx="8.500" cy="5.400" r="1.500" fill="#e2e2e2"/></svg>
<div class="t" style="left:146.6px;top:194.5px;font-size:12.8px;color:#e6e6e6;letter-spacing:-0.32px;">Effects</div>
<svg style="left:144.4px;top:220.4px" width="17" height="11.200"><path d="M0.300 5.600C3 1.400 6 0.300 8.500 0.300S14 1.400 16.700 5.600C14 9.800 11 10.900 8.500 10.900S3 9.800 0.300 5.600z" fill="#e2e2e2"/><circle cx="8.500" cy="5.400" r="3.300" fill="#535353"/><circle cx="8.500" cy="5.400" r="1.500" fill="#e2e2e2"/></svg>
<div class="t" style="left:167.4px;top:219.5px;font-size:12.8px;color:#e6e6e6;letter-spacing:-0.25px;">Outer Glow</div>
<svg style="left:11.7px;top:257.6px" width="17" height="11.200"><path d="M0.300 5.600C3 1.400 6 0.300 8.500 0.300S14 1.400 16.700 5.600C14 9.800 11 10.900 8.500 10.900S3 9.800 0.300 5.600z" fill="#e2e2e2"/><circle cx="8.500" cy="5.400" r="3.300" fill="#535353"/><circle cx="8.500" cy="5.400" r="1.500" fill="#e2e2e2"/></svg>
<div class="abs" style="left:104.0px;top:244.3px;width:39.6px;height:37.2px;border:1px solid #2e2e2e;background-color:#fff;background-image:conic-gradient(#fff 25%,#cdcdcd 0 50%,#fff 0 75%,#cdcdcd 0);background-size:6.2px 6.2px;"></div>
<svg style="left:127.6px;top:265.1px" width="16" height="16.400"><rect x="0" y="0" width="16" height="16.400" fill="#4a4a4a"/><path d="M5.600 2h5l3.400 3.400V13H5.600z" fill="#dcdcdc"/><path d="M10.200 2v3.800H14" fill="none" stroke="#4a4a4a" stroke-width="1"/><rect x="2.400" y="8" width="6.400" height="6.400" fill="#dcdcdc" stroke="#4a4a4a" stroke-width="1"/></svg>
<div class="t" style="left:155.2px;top:257.0px;font-size:12.8px;color:#e6e6e6;letter-spacing:-0.08px;">barcode (12)</div>
<svg style="left:243.0px;top:256.5px" width="16" height="14"><circle cx="9.800" cy="5.400" r="4.600" fill="none" stroke="#bdbdbd" stroke-width="1.300"/><circle cx="5.400" cy="8.600" r="4.600" fill="none" stroke="#9a9a9a" stroke-width="1.300"/></svg>
<svg style="left:122.5px;top:303.3px" width="17" height="11.200"><path d="M0.300 5.600C3 1.400 6 0.300 8.500 0.300S14 1.400 16.700 5.600C14 9.800 11 10.900 8.500 10.900S3 9.800 0.300 5.600z" fill="#e2e2e2"/><circle cx="8.500" cy="5.400" r="3.300" fill="#535353"/><circle cx="8.500" cy="5.400" r="1.500" fill="#e2e2e2"/></svg>
<div class="abs" style="left:144.0px;top:292.2px;width:39.4px;height:36.6px;background:#ffffff;border:1px solid #2e2e2e;"></div>
<div class="t" style="left:196.3px;top:301.2px;font-size:12.8px;color:#e6e6e6;letter-spacing:-0.32px;">Smart Filters</div>
<svg style="left:144.4px;top:337.8px" width="17" height="11.200"><path d="M0.300 5.600C3 1.400 6 0.300 8.500 0.300S14 1.400 16.700 5.600C14 9.800 11 10.900 8.500 10.900S3 9.800 0.300 5.600z" fill="#e2e2e2"/><circle cx="8.500" cy="5.400" r="3.300" fill="#535353"/><circle cx="8.500" cy="5.400" r="1.500" fill="#e2e2e2"/></svg>
<div class="t" style="left:167.4px;top:336.3px;font-size:12.8px;color:#e6e6e6;letter-spacing:-0.60px;">Sharpen</div>
<svg style="left:246.6px;top:338.8px" width="16" height="13"><path d="M0 1h16M0 11.600h16" stroke="#d8d8d8" stroke-width="1.200"/><path d="M4 6.200h8" stroke="#d8d8d8" stroke-width="1.200"/><path d="M8 1.600l2.600 2.800H5.400z" fill="#d8d8d8" transform="translate(0,0.800)"/><path d="M11.400 7.400l2.600 3H8.800z" fill="#d8d8d8" transform="translate(0,0.800)"/></svg>
<svg style="left:144.4px;top:361.6px" width="17" height="11.200"><path d="M0.300 5.600C3 1.400 6 0.300 8.500 0.300S14 1.400 16.700 5.600C14 9.800 11 10.900 8.500 10.900S3 9.800 0.300 5.600z" fill="#e2e2e2"/><circle cx="8.500" cy="5.400" r="3.300" fill="#535353"/><circle cx="8.500" cy="5.400" r="1.500" fill="#e2e2e2"/></svg>
<div class="t" style="left:167.4px;top:359.1px;font-size:12.8px;color:#e6e6e6;letter-spacing:-0.52px;">Levels</div>
<svg style="left:246.6px;top:362.6px" width="16" height="13"><path d="M0 1h16M0 11.600h16" stroke="#d8d8d8" stroke-width="1.200"/><path d="M4 6.200h8" stroke="#d8d8d8" stroke-width="1.200"/><path d="M8 1.600l2.600 2.800H5.400z" fill="#d8d8d8" transform="translate(0,0.800)"/><path d="M11.400 7.400l2.600 3H8.800z" fill="#d8d8d8" transform="translate(0,0.800)"/></svg>
<svg style="left:144.4px;top:385.7px" width="17" height="11.200"><path d="M0.300 5.600C3 1.400 6 0.300 8.500 0.300S14 1.400 16.700 5.600C14 9.800 11 10.900 8.500 10.900S3 9.800 0.300 5.600z" fill="#e2e2e2"/><circle cx="8.500" cy="5.400" r="3.300" fill="#535353"/><circle cx="8.500" cy="5.400" r="1.500" fill="#e2e2e2"/></svg>
<div class="t" style="left:167.4px;top:384.2px;font-size:12.8px;color:#e6e6e6;letter-spacing:-0.30px;">Gaus...Blur</div>
<svg style="left:246.6px;top:386.7px" width="16" height="13"><path d="M0 1h16M0 11.600h16" stroke="#d8d8d8" stroke-width="1.200"/><path d="M4 6.200h8" stroke="#d8d8d8" stroke-width="1.200"/><path d="M8 1.600l2.600 2.800H5.400z" fill="#d8d8d8" transform="translate(0,0.800)"/><path d="M11.400 7.400l2.600 3H8.800z" fill="#d8d8d8" transform="translate(0,0.800)"/></svg>
<svg style="left:11.7px;top:424.1px" width="17" height="11.200"><path d="M0.300 5.600C3 1.400 6 0.300 8.500 0.300S14 1.400 16.700 5.600C14 9.800 11 10.900 8.500 10.900S3 9.800 0.300 5.600z" fill="#e2e2e2"/><circle cx="8.500" cy="5.400" r="3.300" fill="#535353"/><circle cx="8.500" cy="5.400" r="1.500" fill="#e2e2e2"/></svg>
<div class="t" style="left:114.2px;top:417.6px;font-size:24px;font-family:'Liberation Serif',serif;color:#e6e6e6;transform:scaleX(1.100);transform-origin:left;">T</div>
<div class="t" style="left:154.6px;top:423.9px;font-size:12.8px;color:#e6e6e6;letter-spacing:-0.05px;">Bar C...mber</div>
<div class="t" style="left:243.0px;top:421.5px;font-size:17px;font-style:italic;font-family:'Liberation Serif',serif;color:#e6e6e6;">fx</div>
<div class="t" style="left:146.6px;top:458.8px;font-size:12.8px;color:#e6e6e6;letter-spacing:-0.32px;">Effects</div>
<svg style="left:144.3px;top:484.7px" width="17" height="11.200"><path d="M0.300 5.600C3 1.400 6 0.300 8.500 0.300S14 1.400 16.700 5.600C14 9.800 11 10.900 8.500 10.900S3 9.800 0.300 5.600z" fill="#8e8e8e"/><circle cx="8.500" cy="5.400" r="3.300" fill="#535353"/><circle cx="8.500" cy="5.400" r="1.500" fill="#8e8e8e"/></svg>
<div class="t" style="left:167.3px;top:481.0px;font-size:12.8px;color:#e6e6e6;letter-spacing:-0.21px;">Outer Glow</div>
<svg style="left:11.7px;top:521.7px" width="17" height="11.200"><path d="M0.300 5.600C3 1.400 6 0.300 8.500 0.300S14 1.400 16.700 5.600C14 9.800 11 10.900 8.500 10.900S3 9.800 0.300 5.600z" fill="#e2e2e2"/><circle cx="8.500" cy="5.400" r="3.300" fill="#535353"/><circle cx="8.500" cy="5.400" r="1.500" fill="#e2e2e2"/></svg>
<div class="abs" style="left:84.0px;top:508.0px;width:39.600px;height:36.400px;border:1px solid #2e2e2e;background-color:#fff;background-image:conic-gradient(#fff 25%,#d4d4d4 0 50%,#fff 0 75%,#d4d4d4 0);background-size:6.0px 6.0px;"><div class="abs" style="left:7.600px;top:19.600px;width:23.400px;height:14px;background:#f7ebf0;border-radius:1px"></div><div class="abs" style="left:14.600px;top:21px;width:3px;height:7px;background:#b9a9b0"></div><div class="abs" style="left:9.400px;top:28.600px;width:3.600px;height:3.600px;background:#c9c2c5"></div><div class="abs" style="left:17.400px;top:31.400px;width:11px;height:1.500px;background:#4a4a4a"></div></div>
<div class="t" style="left:134.8px;top:521.5px;font-size:12.8px;color:#e6e6e6;letter-spacing:-0.37px;">Background</div>
<div class="abs" style="left:0px;top:551.1px;width:295.6px;height:1px;background:#424242;"></div>
<svg style="left:40.6px;top:562.3px" width="18" height="9"><path d="M7.400 1H4.400a3.400 3.400 0 0 0 0 6.800h3M10.600 1h3a3.400 3.400 0 0 1 0 6.800h-3M5.400 4.400h7.200" fill="none" stroke="#a8a8a8" stroke-width="1.600"/></svg>
<div class="t" style="left:77.0px;top:558.9px;font-size:18px;font-style:italic;font-family:'Liberation Serif',serif;color:#9a9a9a;">fx</div>
<svg style="left:109.6px;top:561.1px" width="17" height="13"><rect x="0" y="0" width="16.400" height="12.600" rx="1" fill="#a8a8a8"/><circle cx="8.200" cy="6.300" r="3.700" fill="#535353"/></svg>
<svg style="left:144.6px;top:560.1px" width="19" height="17"><circle cx="6.800" cy="6.800" r="5.900" fill="none" stroke="#d8d8d8" stroke-width="1.500"/><path d="M11 2.600A5.900 5.900 0 0 0 2.600 11z" fill="#d8d8d8"/><path d="M13 13.400h5l-2.500 2.800z" fill="#d8d8d8"/></svg>
<svg style="left:176.8px;top:560.5px" width="17" height="14"><path d="M0 1.400c0-.8.400-1.200 1.200-1.200h4.600l1.600 2h8c.8 0 1.200.400 1.200 1.200v9c0 .8-.4 1.200-1.200 1.200H1.200C.4 13.600 0 13.200 0 12.400z" fill="#cfcfcf"/></svg>
<svg style="left:211.6px;top:559.9px" width="15" height="15"><rect x=".8" y=".8" width="13.200" height="13.200" fill="none" stroke="#d8d8d8" stroke-width="1.500"/><path d="M7.400 4v6.800M4 7.400h6.800" stroke="#d8d8d8" stroke-width="1.500"/></svg>
<svg style="left:245.6px;top:559.1px" width="13" height="16"><path d="M1.800 4.400h9.400l-.8 10.800H2.600z" fill="none" stroke="#a8a8a8" stroke-width="1.400"/><path d="M0 3h13M4.400 2.800V.8h4.200v2" fill="none" stroke="#a8a8a8" stroke-width="1.400"/><path d="M4.600 6.400v6.600M6.500 6.400v6.600M8.400 6.400v6.600" stroke="#a8a8a8" stroke-width=".9"/></svg>
<div class="abs" style="left:0px;top:582.0px;width:295.6px;height:1px;background:#424242;"></div>
<div class="abs" style="left:135.6px;top:584.5px;width:24px;height:4.400px;background:repeating-linear-gradient(90deg,#434343 0 1px,transparent 1px 2.2px)"></div>
</div>
<div id="status" class="abs" style="left:0;top:819px;width:1394px;height:21px;background:#4a4a4a;border-top:1px solid #3a3a3a">
<div class="abs" style="left:0px;top:0px;width:61px;height:20px;background:#535353;"></div>
<div class="abs" style="left:61px;top:0px;width:230px;height:20px;background:#585858;border-left:1px solid #444;border-right:1px solid #444;"></div>
<div class="t" style="left:8.4px;top:2.9px;font-size:12.4px;color:#e4e4e4;letter-spacing:0.09px;">66.67%</div>
<div class="t" style="left:91.0px;top:2.9px;font-size:12.4px;color:#dcdcdc;letter-spacing:-0.05px;">1350 px x 1217 px (300 ppi)</div>
<svg style="left:278px;top:5px" width="6" height="11"><path d="M0.800 0.600l3.600 4.900-3.600 4.900" fill="none" stroke="#c8c8c8" stroke-width="1.100"/></svg>
</div>
<div id="taskbar" class="abs" style="left:0;top:840px;width:1600px;height:12px;background:#2b2b2b;border-top:1.400px solid #474747;overflow:hidden">
<div class="abs" style="left:711px;top:7.4px;width:18px;height:18px;background:#3f9ad6;border-radius:50%;"></div>
<div class="abs" style="left:737px;top:4.6px;width:49px;height:20px;background:#3b3b3b;border-radius:4px;box-shadow:0 0 0 1px #474747;"></div>
<div class="abs" style="left:929px;top:8.4px;width:18px;height:18px;background:#0c0c0c;border-radius:50%;"></div>
<div class="abs" style="left:1149px;top:7.4px;width:19px;height:19px;background:#d23a2e;border-radius:50%;"></div>
</div>
</body>
</html>
